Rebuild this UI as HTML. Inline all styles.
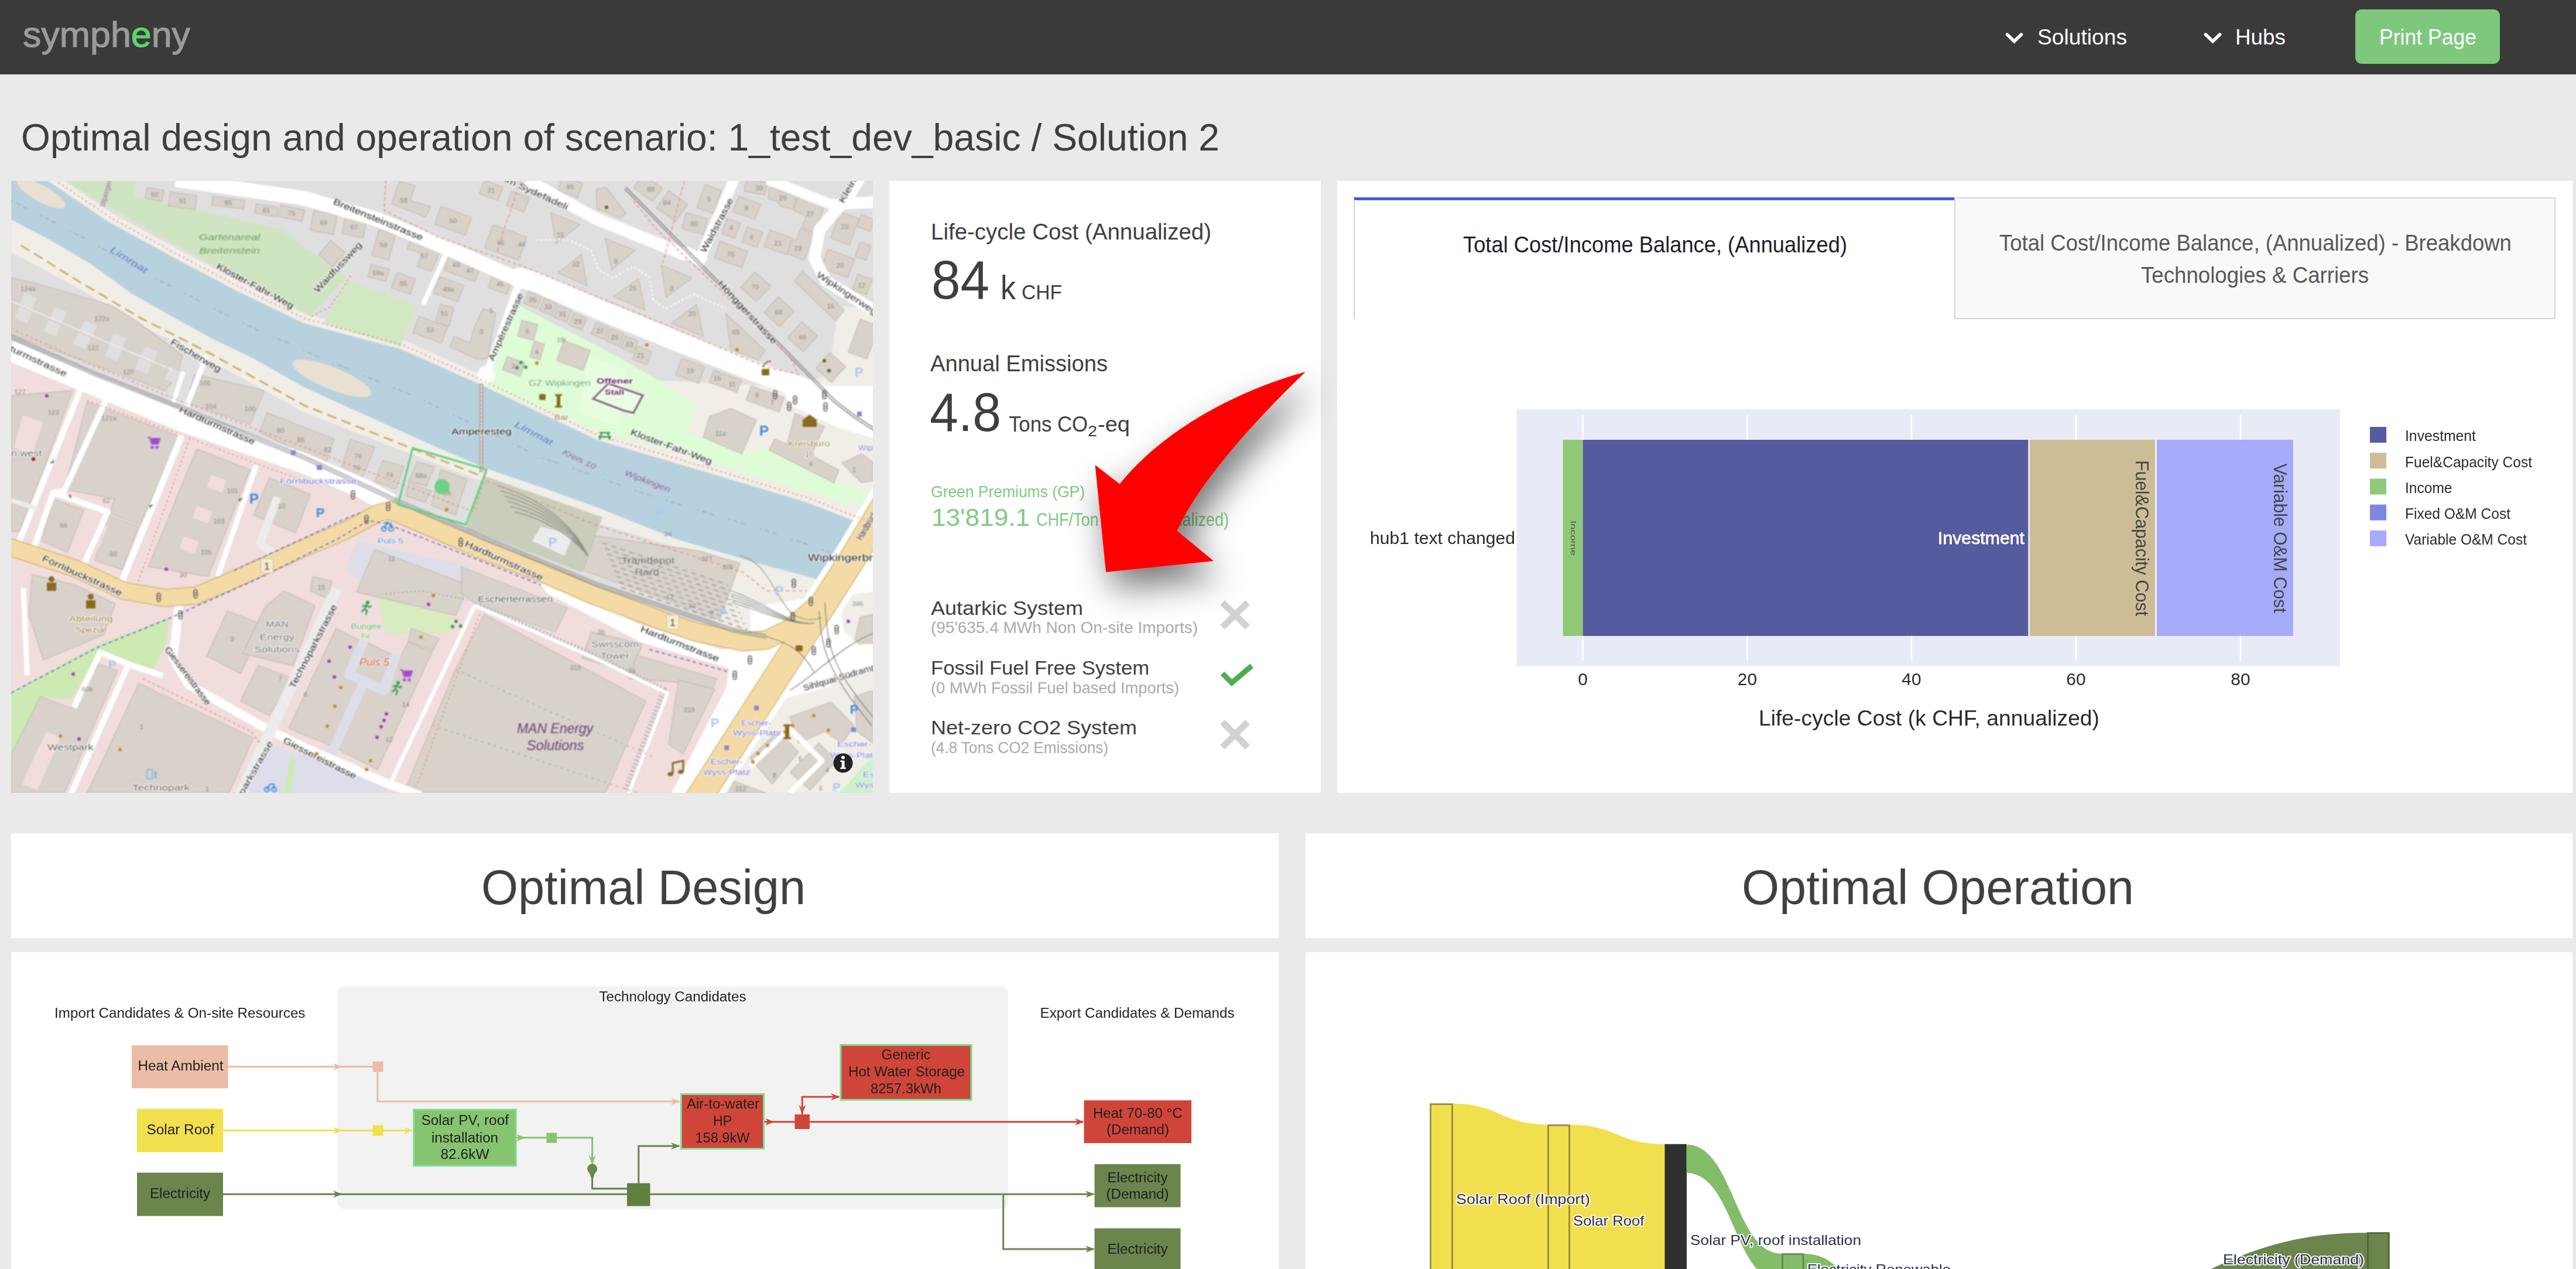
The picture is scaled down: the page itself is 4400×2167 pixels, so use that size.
<!DOCTYPE html>
<html><head><meta charset="utf-8"><title>Sympheny</title>
<style>
*{margin:0;padding:0;box-sizing:border-box}
html,body{width:4400px;height:2167px;overflow:hidden;background:#eaeaea;font-family:"Liberation Sans",sans-serif;color:#3c3c3c}
.abs{position:absolute}
.t{position:absolute;white-space:nowrap;line-height:1;transform-origin:0 0}
.card{position:absolute;background:#fff}
svg{position:absolute;left:0;top:0;overflow:visible}
svg text{font-family:"Liberation Sans",sans-serif}
</style></head><body>
<div class="abs" style="left:0;top:0;width:4400px;height:127px;background:#3a3a3a"></div>
<span class="t" style="left:39px;top:27.5px;font-size:62px;color:#9b9b9b;transform:scaleX(1.0121);-webkit-text-stroke:1.2px #9b9b9b">symph<span style="color:#5fd36c;-webkit-text-stroke:1.2px #5fd36c">e</span>ny</span>
<svg width="4400" height="130"><path d="M3428.5,59 L3440.5,70.5 L3452.5,59" fill="none" stroke="#fff" stroke-width="5.6" stroke-linecap="round" stroke-linejoin="miter"/></svg>
<span class="t" style="left:3480.0px;top:44.7px;font-size:37px;color:#fff;transform:scaleX(1.0052);">Solutions</span>
<svg width="4400" height="130"><path d="M3767.5,59 L3779.5,70.5 L3791.5,59" fill="none" stroke="#fff" stroke-width="5.6" stroke-linecap="round" stroke-linejoin="miter"/></svg>
<span class="t" style="left:3818.0px;top:44.7px;font-size:37px;color:#fff;transform:scaleX(0.9956);">Hubs</span>
<div class="abs" style="left:4023px;top:16px;width:247px;height:93px;background:#7dc87c;border-radius:11px"></div>
<span class="t" style="left:4064.0px;top:44.7px;font-size:37px;color:#fff;transform:scaleX(0.9608);">Print Page</span>
<span class="t" style="left:36.0px;top:202.8px;font-size:64px;color:#3e3e3e;transform:scaleX(1.0041);">Optimal design and operation of scenario: 1_test_dev_basic / Solution 2</span>
<div class="card" id="map" style="left:19px;top:309px;width:1472px;height:1045px;overflow:hidden;background:#ddd">
<svg width="1472" height="1045" viewBox="0 0 1472 1045" style="position:absolute;left:0;top:0;filter:blur(0.9px)"><rect width="1472" height="1045" fill="#e0dfdf"/><polygon points="0.0,300.0 142.0,352.0 276.0,406.0 500.0,482.0 654.0,566.0 800.0,628.0 997.0,708.0 1233.0,783.0 1300.0,790.0 1290.0,860.0 1160.0,1045.0 0.0,1045.0" fill="#f0dddc" /><polygon points="0.0,66.0 69.0,102.0 138.0,143.0 207.0,193.0 276.0,232.0 345.0,270.0 414.0,303.0 500.0,352.0 610.0,402.0 721.0,452.0 812.0,491.0 914.0,526.0 1000.0,557.0 1138.0,612.0 1276.0,653.0 1370.0,678.0 1480.0,708.0 1480.0,745.0 1370.0,715.0 1245.0,662.0 1173.0,636.0 1000.0,584.0 812.0,513.0 790.0,508.0 500.0,395.0 441.0,362.0 331.0,302.0 221.0,246.0 110.0,180.0 0.0,122.0" fill="#f1eee8" /><polygon points="1100.0,340.0 1345.0,352.0 1395.0,330.0 1414.0,215.0 1480.0,215.0 1480.0,600.0 1000.0,450.0 1000.0,400.0" fill="#f1eee8" /><polygon points="1290.0,800.0 1480.0,700.0 1480.0,1045.0 1180.0,1045.0" fill="#f1eee8" /><polyline points="63.0,0.0 165.0,69.0 276.0,130.0 386.0,188.0 500.0,243.0 665.0,287.0 798.0,346.0 1000.0,442.0 1193.0,499.0 1359.0,549.0 1436.0,579.0 1480.0,594.0" fill="none" stroke="#f1eee8" stroke-width="32" stroke-linejoin="round"/><polygon points="91.0,0.0 214.0,0.0 208.0,25.0 460.0,82.0 573.0,165.0 511.0,231.0 500.0,226.0 414.0,182.0 303.0,121.0 193.0,59.0" fill="#cfe5c1" /><polygon points="574.0,170.0 693.0,212.0 665.0,283.0 534.0,243.0" fill="#d1e8c3" /><polygon points="866.0,212.0 1049.0,307.0 1171.0,380.0 1154.0,430.0 1188.0,441.0 1248.0,463.0 1292.0,455.0 1414.0,513.0 1447.0,535.0 1430.0,552.0 1276.0,505.0 1138.0,463.0 1000.0,426.0 818.0,353.0 800.0,342.0 838.0,270.0" fill="#defcd6" /><polygon points="985.0,300.0 1049.0,320.0 1040.0,420.0 970.0,395.0" fill="#e6fde0" /><polygon points="0.0,874.0 149.0,791.0 270.0,746.0 266.0,786.0 243.0,834.0 152.0,801.0 102.0,885.0 50.0,880.0 0.0,979.0" fill="#cdeab2" /><polygon points="624.0,703.0 756.0,703.0 750.0,772.0 640.0,772.0" fill="#d8ecc0" /><polygon points="1414.0,1045.0 1472.0,982.0 1472.0,1045.0" fill="#c9f4cb" /><polygon points="1430.0,520.0 1472.0,535.0 1472.0,560.0 1440.0,552.0" fill="#defcd6" /><polygon points="63.0,0.0 165.0,69.0 276.0,130.0 386.0,188.0 500.0,243.0 665.0,287.0 798.0,346.0 1000.0,442.0 1193.0,499.0 1359.0,549.0 1436.0,579.0 1480.0,594.0 1480.0,708.0 1370.0,678.0 1276.0,653.0 1138.0,612.0 1000.0,557.0 914.0,526.0 812.0,491.0 721.0,452.0 610.0,402.0 500.0,352.0 414.0,303.0 345.0,270.0 276.0,232.0 207.0,193.0 138.0,143.0 69.0,102.0 0.0,66.0 0.0,0.0" fill="#b7d1de" /><polygon points="1447.0,690.0 1480.0,690.0 1480.0,712.0 1452.0,706.0" fill="#b7d1de" /><ellipse cx="52" cy="22" rx="46" ry="14" transform="rotate(28 52 22)" fill="#e9e0d2"/><ellipse cx="548" cy="337" rx="72" ry="19" transform="rotate(22 548 337)" fill="#e9e0d2"/><polyline points="0.0,33.0 120.0,95.0 250.0,168.0 400.0,245.0 520.0,298.0 700.0,372.0 900.0,470.0 1100.0,540.0 1300.0,600.0 1400.0,635.0" fill="none" stroke="#a596c4" stroke-width="1.7" stroke-dasharray="3 6 8 5 8 26" opacity="0.75"/><polygon points="809.0,504.0 1010.0,574.0 975.0,668.0 778.0,593.0" fill="#c9cdbb" /><polygon points="905.0,590.0 960.0,605.0 945.0,640.0 890.0,615.0" fill="#ececec" /><polygon points="1270.0,655.0 1372.0,682.0 1350.0,720.0 1262.0,690.0" fill="#ececec" /><polygon points="591.0,615.0 700.0,640.0 784.0,655.0 770.0,735.0 736.0,730.0 736.0,680.0 650.0,655.0 600.0,690.0 572.0,660.0" fill="#dedeea" /><polygon points="425.0,958.0 500.0,979.0 640.0,1030.0 640.0,1045.0 392.0,1045.0" fill="#dedeea" /><polygon points="466.0,1045.0 477.0,985.0 486.0,988.0 478.0,1045.0" fill="#cdeab2" /><polygon points="1245.0,653.0 1370.0,682.0 1410.0,690.0 1369.0,720.0 1275.0,735.0 1268.0,775.0 1222.0,768.0 1195.0,745.0" fill="#f1eee8" /><polygon points="1416.0,709.0 1480.0,693.0 1480.0,790.0 1448.0,792.0 1422.0,768.0" fill="#f1eee8" /><g fill="#d8d2cb" stroke="#c6bab0" stroke-width="1.3"><polygon points="232.4,11.1 260.9,16.2 257.6,34.9 229.1,29.8"/><polygon points="271.9,18.9 317.4,25.3 314.1,49.1 268.6,42.7"/><polygon points="344.8,25.7 399.3,33.4 397.2,48.3 342.7,40.6"/><polygon points="418.7,38.8 456.1,45.4 453.3,61.2 415.9,54.6"/><polygon points="460.5,40.9 501.6,49.6 497.5,69.1 456.4,60.4"/><polygon points="516.8,50.7 557.1,57.8 551.2,91.3 510.9,84.2"/><polygon points="571.0,60.5 607.2,68.2 601.0,97.5 564.8,89.8"/><polygon points="627.8,83.4 656.8,91.1 645.2,134.6 616.2,126.9"/><polygon points="614.9,142.2 645.8,150.5 640.1,171.8 609.2,163.5"/><polygon points="658.8,156.0 690.8,167.7 681.2,194.0 649.2,182.3"/><polygon points="546.0,101.5 570.5,122.0 550.0,146.5 525.5,126.0"/><polygon points="749.8,124.3 802.4,143.5 792.2,171.7 739.6,152.5"/><polygon points="732.0,163.4 773.3,178.4 763.0,206.6 721.7,191.6"/><polygon points="823.3,158.4 855.3,170.1 846.7,193.6 814.7,181.9"/><polygon points="733.1,210.4 756.3,216.7 748.1,247.6 724.9,241.3"/><polygon points="696.7,231.0 745.6,248.8 735.3,277.0 686.4,259.2"/><polygon points="734.2,43.4 786.8,62.5 775.8,92.6 723.2,73.5"/><polygon points="823.1,74.7 881.3,95.9 866.9,135.3 808.7,114.1"/><polygon points="808.1,-1.1 840.1,10.5 831.9,33.1 799.9,21.5"/><polygon points="854.9,17.3 885.0,28.3 876.1,52.7 846.0,41.7"/><polygon points="942.5,-8.4 976.4,3.9 967.5,28.4 933.6,16.1"/><polygon points="884.0,188.3 906.2,197.3 898.0,217.7 875.8,208.7"/><polygon points="910.0,200.3 932.2,209.3 924.0,229.7 901.8,220.7"/><polygon points="935.0,212.3 957.2,221.3 949.0,241.7 926.8,232.7"/><polygon points="961.0,225.3 983.2,234.3 975.0,254.7 952.8,245.7"/><polygon points="872.6,237.9 899.6,245.1 892.4,272.1 865.4,264.9"/><polygon points="893.4,273.7 910.8,278.4 903.6,305.5 886.2,300.8"/><polygon points="847.6,299.8 877.6,310.7 869.4,333.2 839.4,322.3"/><polygon points="944.2,272.9 989.3,289.3 977.0,323.1 931.9,306.7"/><polygon points="1079.2,-10.9 1112.0,12.0 1096.0,34.9 1063.2,12.0"/><polygon points="1122.9,16.8 1155.7,39.7 1135.1,69.2 1102.3,46.3"/><polygon points="1152.9,54.6 1189.6,64.4 1182.3,91.4 1145.6,81.6"/><polygon points="1185.5,6.1 1213.7,16.4 1199.3,55.9 1171.1,45.6"/><polygon points="1255.9,-4.0 1291.3,2.3 1287.5,24.0 1252.1,17.7"/><polygon points="1242.6,26.0 1280.2,39.7 1270.6,66.0 1233.0,52.3"/><polygon points="1223.2,63.7 1245.8,71.9 1236.2,98.3 1213.6,90.1"/><polygon points="1257.1,78.1 1283.4,87.6 1273.9,113.9 1247.6,104.4"/><polygon points="1211.2,102.9 1258.2,120.0 1248.0,148.1 1201.0,131.0"/><polygon points="1296.4,83.7 1335.9,98.1 1325.6,126.3 1286.1,111.9"/><polygon points="1416.2,52.6 1448.2,64.3 1431.8,109.4 1399.8,97.7"/><polygon points="1395.7,116.8 1440.8,133.2 1429.1,165.2 1384.0,148.8"/><polygon points="1446.4,159.0 1470.8,167.9 1461.2,194.2 1436.8,185.3"/><polygon points="1270.4,155.3 1297.1,179.4 1273.0,206.1 1246.3,182.0"/><polygon points="1310.4,198.0 1337.1,222.1 1313.0,248.8 1286.3,224.7"/><polygon points="1350.4,240.6 1377.1,264.7 1353.0,291.4 1326.3,267.3"/><polygon points="999.0,241.3 1021.2,250.3 1013.0,270.7 990.8,261.7"/><polygon points="1024.0,252.3 1046.2,261.3 1038.0,281.7 1015.8,272.7"/><polygon points="1049.0,264.3 1071.2,273.3 1063.0,293.7 1040.8,284.7"/><polygon points="1070.4,282.0 1094.5,291.7 1085.6,314.0 1061.5,304.3"/><polygon points="1145.4,302.7 1184.9,317.1 1174.6,345.3 1135.1,330.9"/><polygon points="1200.3,323.1 1247.3,340.2 1239.7,360.9 1192.7,343.8"/><polygon points="1398.7,293.2 1425.4,317.3 1401.3,344.0 1374.6,319.9"/><polygon points="1450.3,236.0 1482.2,247.6 1461.7,304.0 1429.8,292.4"/><polygon points="1264.3,349.5 1320.6,370.0 1311.7,394.5 1255.4,374.0"/><polygon points="1450.0,104.4 1468.8,111.2 1460.0,135.6 1441.2,128.8"/><polygon points="1452.5,57.6 1475.0,65.8 1467.5,86.4 1445.0,78.2"/><polygon points="682.0,102.0 732.0,121.0 718.0,154.0 693.0,146.0 701.0,124.0 676.5,116.0"/><polygon points="806.0,218.0 828.0,225.0 814.0,303.0 798.0,305.0 750.0,284.0 756.0,265.0 784.0,276.0 792.0,248.0"/><polygon points="663.0,1.0 690.0,8.0 682.0,33.0 716.5,44.0 708.0,62.0 650.0,39.0"/><polygon points="922.0,54.0 971.6,74.5 930.0,107.5"/><polygon points="974.0,125.5 984.0,179.0 934.0,157.0"/><polygon points="1000.0,14.0 1016.5,11.0 1050.0,55.0 1041.0,63.5 1000.0,47.0"/><polygon points="1294.5,11.0 1341.8,25.0 1335.5,48.8 1313.5,42.5 1310.0,36.0 1293.0,30.0"/><polygon points="1343.4,26.8 1389.0,42.5 1373.0,88.0 1351.0,80.0 1357.6,60.0 1337.0,50.4"/><polygon points="1348.0,82.0 1371.8,89.8 1354.4,135.5 1326.0,124.5 1332.4,102.4 1341.8,100.8"/><polygon points="1015.0,98.0 1066.0,118.6 1026.0,151.7"/><polygon points="1110.0,143.0 1163.0,165.5 1118.6,198.6"/><polygon points="1071.7,167.0 1082.8,220.7 1029.0,197.0"/><polygon points="1171.0,211.0 1182.0,266.0 1128.0,242.8"/><polygon points="1220.7,226.0 1288.0,289.7 1276.0,306.0 1229.0,287.0"/><polygon points="1351.7,154.5 1423.4,220.7 1408.0,238.6 1338.0,171.0"/><polygon points="1193.0,402.0 1229.0,388.6 1273.0,408.0 1248.0,466.0 1182.0,438.0"/><polygon points="1339.0,397.0 1389.0,419.0 1367.0,468.6 1414.0,493.5 1405.5,515.5 1295.0,460.0 1303.5,441.0 1325.5,449.0"/><polygon points="1419.0,482.0 1452.5,466.0 1472.0,480.0 1472.0,512.0 1452.0,515.0"/><polygon points="0.0,165.0 45.0,176.0 171.0,212.0 215.0,240.0 293.0,298.0 283.0,335.0 262.0,358.0 0.0,262.0"/><polygon points="313.0,330.0 433.0,358.0 408.0,416.0 300.0,378.0"/><polygon points="437.0,395.6 552.0,441.0 535.7,486.0 424.5,428.6"/><polygon points="580.0,441.0 621.0,455.0 596.5,515.5 563.0,493.0"/><polygon points="635.0,477.0 671.0,488.0 657.0,526.5 621.0,513.0"/><polygon points="693.0,479.6 723.0,488.0 709.6,521.0 679.0,512.7"/><polygon points="734.0,493.0 778.5,510.0 759.0,570.6 718.0,554.0"/><polygon points="679.0,515.5 718.0,529.0 707.0,548.6 673.7,537.5"/><polygon points="129.6,377.6 286.8,435.5 220.6,587.0 168.0,568.0 176.5,543.0 91.0,526.5"/><polygon points="317.0,457.6 408.0,493.0 336.5,675.0 234.4,659.0"/><polygon points="441.0,507.0 511.0,535.0 486.0,601.0 414.0,571.0"/><polygon points="72.0,543.0 124.0,562.0 96.0,634.0 52.0,615.0"/><polygon points="165.0,571.0 218.0,590.0 190.0,664.0 143.0,648.0"/><polygon points="0.0,367.0 105.0,358.0 60.0,480.0 14.0,598.0 0.0,598.0"/><polygon points="36.0,672.0 110.0,690.0 178.0,722.0 158.0,775.0 55.0,818.0 30.0,740.0"/><polygon points="218.0,858.0 414.0,951.0 372.0,1045.0 130.0,1045.0"/><polygon points="149.0,825.0 182.0,836.0 91.0,1045.0 0.0,1045.0 0.0,979.0 50.0,880.0 102.0,900.0"/><polygon points="369.5,734.0 430.0,758.0 392.0,841.0 334.0,811.0"/><polygon points="465.7,700.0 519.0,725.0 482.0,828.0 395.6,807.0 432.7,729.0"/><polygon points="422.0,827.0 480.0,849.0 441.0,913.0 392.0,888.0"/><polygon points="515.0,675.5 548.0,683.7 540.0,712.6 511.0,700.0"/><polygon points="621.0,629.0 780.0,690.0 760.0,742.0 590.0,702.0"/><polygon points="555.0,764.0 594.5,784.0 610.0,789.4 649.7,808.3 665.4,813.0 678.0,787.8 719.0,804.4 626.0,1005.0 560.5,972.0 535.7,960.0 474.0,935.0"/><polygon points="684.0,764.0 731.6,781.5 720.6,802.0 678.0,786.0"/><polygon points="808.0,740.0 905.0,792.0 1084.0,888.0 1015.0,1045.0 671.0,1045.0 757.0,838.0"/><polygon points="769.0,659.0 950.0,729.0 930.0,770.0 798.0,725.0 769.0,704.0"/><polygon points="991.0,770.0 1078.0,791.0 1060.0,840.0 975.0,815.0"/><polygon points="1069.0,810.0 1205.0,850.0 1196.0,872.0 1140.0,856.0 1055.0,850.0"/><polygon points="1140.0,852.0 1202.0,868.0 1148.0,978.0 1123.0,962.0"/><polygon points="997.0,606.0 1174.0,631.5 1245.0,653.0 1210.0,750.0 1103.0,710.0 977.0,665.0"/><polygon points="1330.0,915.0 1400.0,890.0 1440.0,930.0 1420.0,960.0 1390.0,940.0 1345.0,960.0"/><polygon points="1262.0,985.0 1310.0,940.0 1345.0,975.0 1300.0,1030.0"/><polygon points="1330.0,1010.0 1380.0,960.0 1410.0,990.0 1365.0,1040.0"/><polygon points="1440.0,880.0 1472.0,870.0 1472.0,960.0 1445.0,940.0"/><polygon points="1235.0,1025.0 1290.0,1045.0 1225.0,1045.0"/><polygon points="1450.0,745.0 1472.0,740.0 1472.0,800.0 1440.0,790.0"/></g><g fill="#e0dfdf"><polygon points="22.8,190.7 43.8,200.1 35.2,219.3 14.2,209.9"/><polygon points="14.8,214.7 35.8,224.1 27.2,243.3 6.2,233.9"/><polygon points="74.8,214.7 95.8,224.1 87.2,243.3 66.2,233.9"/><polygon points="63.8,236.7 84.8,246.1 76.2,265.3 55.2,255.9"/><polygon points="125.8,237.7 146.8,247.1 138.2,266.3 117.2,256.9"/><polygon points="114.8,258.7 135.8,268.1 127.2,287.3 106.2,277.9"/><polygon points="175.8,259.7 196.8,269.1 188.2,288.3 167.2,278.9"/><polygon points="168.8,279.7 189.8,289.1 181.2,308.3 160.2,298.9"/><polygon points="229.8,281.7 250.8,291.1 242.2,310.3 221.2,300.9"/><polygon points="219.8,301.7 240.8,311.1 232.2,330.3 211.2,320.9"/><polygon points="270.8,318.7 291.8,328.1 283.2,347.3 262.2,337.9"/></g><polyline points="0.0,205.5 276.0,322.7" fill="none" stroke="#f4f4f4" stroke-width="1.6" /><path d="M602.4,785.5 L577.2,842.2 L637,869.7 L657.6,808.3 M600.8,858.7 L559.9,950 L546,980" fill="none" stroke="#dedeea" stroke-width="16.5" stroke-linejoin="round"/><g fill="#f0dddc"><polygon points="341.6,501.9 367.9,511.5 360.4,532.1 334.1,522.5"/><polygon points="317.6,554.9 343.9,564.5 336.4,585.1 310.1,575.5"/><polygon points="294.6,606.9 320.9,616.5 313.4,637.1 287.1,627.5"/><polygon points="20.0,400.0 55.0,412.0 35.0,470.0 5.0,455.0"/><polygon points="128.0,575.0 165.0,590.0 140.0,650.0 100.0,636.0"/><polygon points="60.0,940.0 85.0,950.0 45.0,1040.0 18.0,1030.0"/></g><g stroke="#a9a39c" stroke-width="2" stroke-dasharray="9 7"><line x1="1010" y1="618.0" x2="1225" y2="690.0"/><line x1="1014" y1="627.5" x2="1229" y2="699.5"/><line x1="1018" y1="637.0" x2="1233" y2="709.0"/><line x1="1022" y1="646.5" x2="1237" y2="718.5"/><line x1="1026" y1="656.0" x2="1241" y2="728.0"/><line x1="1030" y1="665.5" x2="1245" y2="737.5"/><line x1="1034" y1="675.0" x2="1249" y2="747.0"/><line x1="1038" y1="684.5" x2="1253" y2="756.5"/><line x1="1042" y1="694.0" x2="1257" y2="766.0"/></g><polygon points="1314.0,350.0 1480.0,350.0 1480.0,441.0 1414.0,422.0 1331.0,383.0" fill="#ffffff" /><circle cx="811.6" cy="331" r="15" fill="#ffffff"/><polyline points="800.0,725.0 1000.0,812.0 1115.0,869.0 1050.0,1040.0" fill="none" stroke="#b9b9b9" stroke-width="9" stroke-dasharray="2.5 4" stroke-linejoin="round"/><polyline points="281.0,-2.0 500.0,29.5 624.0,65.0 748.0,116.0 870.0,170.0" fill="none" stroke="#ffffff" stroke-width="25" stroke-linejoin="round" stroke-linecap="butt"/><polyline points="868.0,165.0 897.0,173.0 1007.6,221.0 1118.0,266.0 1276.0,328.0 1345.0,350.0 1400.0,371.0" fill="none" stroke="#ffffff" stroke-width="34" stroke-linejoin="round" stroke-linecap="round"/><polyline points="880.0,-2.0 1000.0,65.0 1154.0,127.0" fill="none" stroke="#ffffff" stroke-width="21" stroke-linejoin="round" stroke-linecap="butt"/><polyline points="1235.0,-3.0 1177.0,132.0" fill="none" stroke="#ffffff" stroke-width="18" stroke-linejoin="round" stroke-linecap="butt"/><polyline points="1150.0,120.0 1185.0,140.0" fill="none" stroke="#ffffff" stroke-width="20" stroke-linejoin="round" stroke-linecap="butt"/><polyline points="1292.0,-3.0 1400.0,40.0 1419.0,39.0" fill="none" stroke="#ffffff" stroke-width="18" stroke-linejoin="round" stroke-linecap="butt"/><polyline points="1480.0,36.0 1419.0,39.0 1381.0,83.0 1372.0,132.0 1392.0,171.0 1480.0,225.0" fill="none" stroke="#ffffff" stroke-width="20" stroke-linejoin="round" stroke-linecap="butt"/><polyline points="1428.0,36.0 1452.0,-3.0" fill="none" stroke="#ffffff" stroke-width="14" stroke-linejoin="round" stroke-linecap="butt"/><polyline points="867.0,176.0 812.0,331.0" fill="none" stroke="#ffffff" stroke-width="12.5" stroke-linejoin="round" stroke-linecap="butt"/><polyline points="743.0,124.0 705.0,208.0" fill="none" stroke="#ffffff" stroke-width="8" stroke-linejoin="round" stroke-linecap="round"/><polyline points="-3.0,289.5 142.0,349.0 276.0,404.0 295.5,412.0 500.0,482.0 600.0,525.0 650.0,552.0" fill="none" stroke="#ffffff" stroke-width="35" stroke-linejoin="round" stroke-linecap="butt"/><polyline points="119.0,355.0 14.0,615.0" fill="none" stroke="#ffffff" stroke-width="10" stroke-linejoin="round" stroke-linecap="butt"/><polyline points="163.0,372.0 91.0,529.0 72.0,532.0 39.0,626.0" fill="none" stroke="#ffffff" stroke-width="10" stroke-linejoin="round" stroke-linecap="butt"/><polyline points="72.0,532.0 165.0,565.0 121.0,662.0" fill="none" stroke="#ffffff" stroke-width="10" stroke-linejoin="round" stroke-linecap="butt"/><polyline points="292.0,433.0 187.0,689.0" fill="none" stroke="#ffffff" stroke-width="11" stroke-linejoin="round" stroke-linecap="butt"/><polyline points="419.0,485.0 353.0,675.0" fill="none" stroke="#ffffff" stroke-width="9" stroke-linejoin="round" stroke-linecap="butt"/><polyline points="294.0,326.0 277.0,378.0" fill="none" stroke="#ffffff" stroke-width="8" stroke-linejoin="round" stroke-linecap="butt"/><polyline points="334.0,298.0 300.0,384.0" fill="none" stroke="#ffffff" stroke-width="9" stroke-linejoin="round" stroke-linecap="butt"/><polyline points="21.0,695.0 27.5,844.0" fill="none" stroke="#ffffff" stroke-width="9" stroke-linejoin="round" stroke-linecap="butt"/><polyline points="0.0,545.0 45.0,560.0" fill="none" stroke="#ececec" stroke-width="8" stroke-linejoin="round" stroke-linecap="butt"/><polyline points="287.0,715.0 281.0,780.0 276.0,814.0 303.0,860.0 430.0,932.0 500.0,967.0 638.0,1027.0 700.0,1050.0" fill="none" stroke="#ffffff" stroke-width="15" stroke-linejoin="round" stroke-linecap="butt"/><polyline points="259.0,845.0 204.0,827.0 152.0,805.0 107.5,899.0" fill="none" stroke="#ffffff" stroke-width="10" stroke-linejoin="round" stroke-linecap="butt"/><polyline points="198.5,830.0 150.0,940.0 102.0,1048.0" fill="none" stroke="#ffffff" stroke-width="10" stroke-linejoin="round" stroke-linecap="butt"/><polyline points="556.0,696.0 445.0,935.0 391.0,1048.0" fill="none" stroke="#ececec" stroke-width="19" stroke-linejoin="round" stroke-linecap="butt"/><polyline points="792.0,725.0 649.0,1026.0" fill="none" stroke="#ffffff" stroke-width="7" stroke-linejoin="round" stroke-linecap="butt"/><polyline points="792.0,725.0 1000.0,816.0 1121.0,875.0 1054.0,1048.0" fill="none" stroke="#ffffff" stroke-width="6" stroke-linejoin="round" stroke-linecap="butt"/><polyline points="455.0,540.0 425.0,620.0 455.0,640.0" fill="none" stroke="#ececec" stroke-width="14" stroke-linejoin="round" stroke-linecap="butt"/><polygon points="900.0,682.0 930.0,690.0 1076.0,758.0 1214.0,800.0 1303.0,786.0 1340.0,800.0 1276.0,860.0 1154.5,1045.0 1128.0,1045.0 1221.0,866.0 1226.0,832.0 1076.0,788.0 915.0,704.0" fill="#ffffff" /><polyline points="1520.0,508.0 1434.0,650.0 1402.0,700.0 1273.5,900.0 1180.5,1045.0 1160.0,1077.0" fill="none" stroke="#ffffff" stroke-width="66" /><polyline points="1300.0,880.0 1318.0,872.0 1388.0,838.0 1480.0,820.0" fill="none" stroke="#ffffff" stroke-width="24" /><polyline points="1262.0,1000.0 1330.0,935.0 1385.0,990.0 1330.0,1045.0" fill="none" stroke="#ffffff" stroke-width="9" stroke-linejoin="round"/><polyline points="1230.0,960.0 1320.0,880.0 1400.0,860.0" fill="none" stroke="#ffffff" stroke-width="7" /><polygon points="1262.0,727.0 1300.0,722.0 1362.0,712.0 1340.0,745.0 1305.0,765.0 1262.0,770.0" fill="#ffffff" /><polygon points="1400.0,700.0 1440.0,640.0 1480.0,610.0 1480.0,700.0 1416.0,709.0 1422.0,768.0 1448.0,792.0 1480.0,790.0 1480.0,835.0 1395.0,850.0 1300.0,880.0 1330.0,820.0" fill="#ffffff" /><polyline points="-3.0,625.0 110.0,662.0 193.0,700.0 262.0,712.0 317.0,708.0 375.0,683.0 500.0,627.0 569.0,598.0 625.0,568.0 645.0,562.0" fill="none" stroke="#c9a85e" stroke-width="30.5" stroke-linejoin="round"/><polyline points="640.0,561.0 660.0,567.0 776.0,617.0 800.0,628.0 914.0,672.0 997.0,708.0 1115.0,752.0 1172.0,771.0 1251.0,787.0 1290.0,784.0 1330.0,764.0 1362.0,736.0 1390.0,712.0" fill="none" stroke="#c9a85e" stroke-width="32.5" stroke-linejoin="round"/><polyline points="1520.0,508.0 1434.0,650.0 1402.0,700.0 1273.5,900.0 1180.5,1045.0 1160.0,1077.0" fill="none" stroke="#c9a85e" stroke-width="46.5" stroke-linejoin="round"/><polyline points="-3.0,625.0 110.0,662.0 193.0,700.0 262.0,712.0 317.0,708.0 375.0,683.0 500.0,627.0 569.0,598.0 625.0,568.0 645.0,562.0" fill="none" stroke="#f4dba6" stroke-width="28" stroke-linejoin="round"/><polyline points="640.0,561.0 660.0,567.0 776.0,617.0 800.0,628.0 914.0,672.0 997.0,708.0 1115.0,752.0 1172.0,771.0 1251.0,787.0 1290.0,784.0 1330.0,764.0 1362.0,736.0 1390.0,712.0" fill="none" stroke="#f4dba6" stroke-width="30" stroke-linejoin="round"/><polyline points="1520.0,508.0 1434.0,650.0 1402.0,700.0 1273.5,900.0 1180.5,1045.0 1160.0,1077.0" fill="none" stroke="#f4dba6" stroke-width="44" stroke-linejoin="round"/><polyline points="1050.4,10.7 1382.4,348.7 1406.3,373.6 1441.1,400.4 1481.0,426.4" fill="none" stroke="#707070" stroke-width="1.4" /><polyline points="1047.6,13.3 1379.6,351.3 1403.7,376.4 1438.9,403.6 1479.0,429.6" fill="none" stroke="#707070" stroke-width="1.4" /><polyline points="-4.4,268.1 140.7,332.1 294.2,392.7 498.7,475.1 663.6,552.1 798.7,609.1 998.8,692.2 1232.0,770.3 1289.4,781.3" fill="none" stroke="#808080" stroke-width="0.95" /><polyline points="-3.5,266.1 141.5,330.1 295.1,390.6 499.5,473.1 664.5,550.1 799.5,607.1 999.6,690.1 1232.6,768.1 1289.8,779.2" fill="none" stroke="#808080" stroke-width="0.95" /><polyline points="-2.5,263.9 142.5,327.9 295.9,388.4 500.5,470.9 665.5,547.9 800.5,604.9 1000.4,687.9 1233.4,765.9 1290.2,776.8" fill="none" stroke="#808080" stroke-width="0.95" /><polyline points="-1.6,261.9 143.3,325.9 296.8,386.3 501.3,468.9 666.4,545.9 801.3,602.9 1001.2,685.8 1234.0,763.7 1290.6,774.7" fill="none" stroke="#808080" stroke-width="0.95" /><path d="M830,520 C900,540 960,585 985,640" fill="none" stroke="#8f9088" stroke-width="1.3"/><path d="M836,529 C904,548 960,590 985,640" fill="none" stroke="#8f9088" stroke-width="1.3"/><path d="M842,538 C908,556 960,595 985,640" fill="none" stroke="#8f9088" stroke-width="1.3"/><path d="M848,547 C912,564 960,600 985,640" fill="none" stroke="#8f9088" stroke-width="1.3"/><path d="M854,556 C916,572 960,605 985,640" fill="none" stroke="#8f9088" stroke-width="1.3"/><path d="M860,565 C920,580 960,610 985,640" fill="none" stroke="#8f9088" stroke-width="1.3"/><path d="M1230,700 C1290,720 1330,760 1372,755" fill="none" stroke="#8f9088" stroke-width="1.2"/><path d="M1230,705 C1290,724 1330,760 1372,755" fill="none" stroke="#8f9088" stroke-width="1.2"/><path d="M1230,710 C1290,728 1330,760 1372,755" fill="none" stroke="#8f9088" stroke-width="1.2"/><path d="M1230,715 C1290,732 1330,760 1372,755" fill="none" stroke="#8f9088" stroke-width="1.2"/><path d="M1230,720 C1290,736 1330,760 1372,755" fill="none" stroke="#8f9088" stroke-width="1.2"/><path d="M1245,640 C1290,650 1300,700 1330,735 C1345,750 1370,752 1385,745" fill="none" stroke="#8f9088" stroke-width="1.2"/><path d="M1290,778 C1330,790 1350,800 1372,840 M1390,720 C1395,800 1400,830 1480,925 M1380,735 C1385,800 1392,835 1470,930 M1330,870 C1380,840 1420,790 1480,770" fill="none" stroke="#7b7b7b" stroke-width="1.3"/><polyline points="17.0,110.0 110.0,168.0 221.0,234.0 331.0,290.0 441.0,350.0 500.0,383.0 798.0,502.0" fill="none" stroke="#c4a64a" stroke-width="2.6" stroke-dasharray="17 9"/><polyline points="67.5,-6.6 169.2,62.2 279.8,123.0 389.6,180.9 502.7,235.5 667.6,279.4 801.4,338.7 1002.9,434.5 1195.3,491.3 1361.5,541.4 1438.8,571.5 1482.6,586.4" fill="none" stroke="#f08a80" stroke-width="1.8" stroke-dasharray="3 5"/><polyline points="580.0,162.0 545.0,215.0 512.0,232.0" fill="none" stroke="#f08a80" stroke-width="1.8" stroke-dasharray="3 5"/><polyline points="640.0,-2.0 637.0,50.0 730.0,96.0 880.0,148.0 1100.0,238.0 1290.0,318.0 1345.0,330.0 1330.0,300.0 1100.0,80.0 1060.0,30.0" fill="none" stroke="#f08a80" stroke-width="1.6" stroke-dasharray="6 4"/><polyline points="870.0,0.0 830.0,120.0" fill="none" stroke="#f08a80" stroke-width="1.6" stroke-dasharray="6 4"/><polyline points="1150.0,0.0 1113.0,140.0" fill="none" stroke="#f08a80" stroke-width="1.6" stroke-dasharray="6 4"/><polyline points="0.0,252.0 142.0,316.0 295.0,378.0 520.0,462.0 790.0,565.0 812.0,498.0" fill="none" stroke="#f08a80" stroke-width="1.6" stroke-dasharray="4 5"/><polyline points="812.0,512.0 1000.0,588.0 1250.0,668.0 1290.0,700.0 1360.0,700.0" fill="none" stroke="#f08a80" stroke-width="1.6" stroke-dasharray="6 5"/><polyline points="305.0,440.0 215.0,690.0" fill="none" stroke="#f08a80" stroke-width="1.6" stroke-dasharray="3 5"/><polyline points="130.0,375.0 290.0,433.0 420.0,483.0 520.0,520.0" fill="none" stroke="#f08a80" stroke-width="1.6" stroke-dasharray="3 5"/><polyline points="800.0,740.0 690.0,1040.0" fill="none" stroke="#f08a80" stroke-width="1.6" stroke-dasharray="3 5"/><polyline points="225.0,850.0 410.0,940.0 425.0,960.0" fill="none" stroke="#f08a80" stroke-width="1.6" stroke-dasharray="5 4"/><polyline points="897.0,101.0 950.0,100.0 991.0,119.0 1004.0,152.0 1028.0,165.0 1063.0,146.0 1091.0,165.0 1097.0,204.0 1119.0,218.0 1165.0,193.0 1221.0,218.0" fill="none" stroke="#f6f6f6" stroke-width="3.2" stroke-dasharray="3.5 4" stroke-linejoin="round"/><polyline points="803.0,346.0 803.0,498.0" fill="none" stroke="#d9d5cf" stroke-width="6" /><polyline points="800.5,346.0 800.5,498.0" fill="none" stroke="#8a8a8a" stroke-width="1" /><polyline points="805.5,346.0 805.5,498.0" fill="none" stroke="#8a8a8a" stroke-width="1" /><polyline points="803.0,346.0 803.0,498.0" fill="none" stroke="#f08a80" stroke-width="1.6" stroke-dasharray="3 4"/><polyline points="0.0,874.0 149.0,796.0 270.0,747.0 330.0,720.0 420.0,680.0 560.0,610.0 610.0,580.0 640.0,585.0 780.0,640.0 905.0,690.0" fill="none" stroke="#5a5ae0" stroke-width="1.6" stroke-dasharray="6 5"/><polyline points="381.0,665.0 500.0,610.0 575.0,575.0 600.0,565.0" fill="none" stroke="#5a5ae0" stroke-width="1.6" stroke-dasharray="6 5"/><polyline points="1090.0,800.0 1225.0,838.0" fill="none" stroke="#5a5ae0" stroke-width="1.6" stroke-dasharray="6 5"/><polyline points="640.0,705.0 700.0,700.0 780.0,715.0" fill="none" stroke="#9a9a9a" stroke-width="2" stroke-dasharray="2 5"/><polyline points="760.0,835.0 1100.0,985.0" fill="none" stroke="#aaa" stroke-width="2" stroke-dasharray="3 8"/><polyline points="720.0,930.0 1070.0,1045.0" fill="none" stroke="#aaa" stroke-width="2" stroke-dasharray="3 8"/><text transform="translate(548.9,39.0) rotate(22.5)" font-size="15" fill="#2e2e2e" textLength="164.5" lengthAdjust="spacingAndGlyphs" stroke="#fff" stroke-opacity="0.75" stroke-width="2.4" paint-order="stroke" stroke-linejoin="round">Breitensteinstrasse</text><text transform="translate(349.4,148.8) rotate(28.3)" font-size="15" fill="#2e2e2e" textLength="147.6" lengthAdjust="spacingAndGlyphs" stroke="#fff" stroke-opacity="0.75" stroke-width="2.4" paint-order="stroke" stroke-linejoin="round">Kloster-Fahr-Weg</text><text transform="translate(524.0,191.7) rotate(-47.2)" font-size="15" fill="#2e2e2e" textLength="111.8" lengthAdjust="spacingAndGlyphs" stroke="#fff" stroke-opacity="0.75" stroke-width="2.4" paint-order="stroke" stroke-linejoin="round">Waidfussweg</text><text transform="translate(271.3,277.7) rotate(30.3)" font-size="15" fill="#2e2e2e" textLength="97.2" lengthAdjust="spacingAndGlyphs" stroke="#fff" stroke-opacity="0.75" stroke-width="2.4" paint-order="stroke" stroke-linejoin="round">Fischerweg</text><text transform="translate(285.8,393.9) rotate(24.0)" font-size="15" fill="#2e2e2e" textLength="140.1" lengthAdjust="spacingAndGlyphs" stroke="#fff" stroke-opacity="0.75" stroke-width="2.4" paint-order="stroke" stroke-linejoin="round">Hardturmstrasse</text><text transform="translate(-3.3,289.9) rotate(25.1)" font-size="15" fill="#2e2e2e" textLength="106.0" lengthAdjust="spacingAndGlyphs" stroke="#fff" stroke-opacity="0.75" stroke-width="2.4" paint-order="stroke" stroke-linejoin="round">turmstrasse</text><text transform="translate(51.8,647.9) rotate(24.3)" font-size="15" fill="#2e2e2e" textLength="148.1" lengthAdjust="spacingAndGlyphs" stroke="#fff" stroke-opacity="0.75" stroke-width="2.4" paint-order="stroke" stroke-linejoin="round">Förrlibuckstrasse</text><text transform="translate(823.9,308.2) rotate(-65.9)" font-size="15" fill="#2e2e2e" textLength="124.9" lengthAdjust="spacingAndGlyphs" stroke="#fff" stroke-opacity="0.75" stroke-width="2.4" paint-order="stroke" stroke-linejoin="round">Ampèrestrasse</text><text transform="translate(1206.0,175.7) rotate(47.3)" font-size="15" fill="#2e2e2e" textLength="141.5" lengthAdjust="spacingAndGlyphs" stroke="#fff" stroke-opacity="0.75" stroke-width="2.4" paint-order="stroke" stroke-linejoin="round">Hönggerstrasse</text><text transform="translate(1185.8,123.5) rotate(-62.2)" font-size="15" fill="#2e2e2e" textLength="102.9" lengthAdjust="spacingAndGlyphs" stroke="#fff" stroke-opacity="0.75" stroke-width="2.4" paint-order="stroke" stroke-linejoin="round">Waidstrasse</text><text transform="translate(1375.0,162.5) rotate(33.8)" font-size="15" fill="#2e2e2e" textLength="120.4" lengthAdjust="spacingAndGlyphs" stroke="#fff" stroke-opacity="0.75" stroke-width="2.4" paint-order="stroke" stroke-linejoin="round">Wipkingerweg</text><text transform="translate(833.7,-3.1) rotate(24.7)" font-size="15" fill="#2e2e2e" textLength="126.6" lengthAdjust="spacingAndGlyphs" stroke="#fff" stroke-opacity="0.75" stroke-width="2.4" paint-order="stroke" stroke-linejoin="round">Am Sydefädeli</text><text transform="translate(1421.7,38.7) rotate(-60.1)" font-size="15" fill="#2e2e2e" textLength="46.1" lengthAdjust="spacingAndGlyphs" stroke="#fff" stroke-opacity="0.75" stroke-width="2.4" paint-order="stroke" stroke-linejoin="round">Klein</text><text transform="translate(773.8,622.9) rotate(24.4)" font-size="15" fill="#2e2e2e" textLength="145.0" lengthAdjust="spacingAndGlyphs" stroke="#fff" stroke-opacity="0.75" stroke-width="2.4" paint-order="stroke" stroke-linejoin="round">Hardturmstrasse</text><text transform="translate(1074.0,769.0) rotate(21.4)" font-size="15" fill="#2e2e2e" textLength="142.8" lengthAdjust="spacingAndGlyphs" stroke="#fff" stroke-opacity="0.75" stroke-width="2.4" paint-order="stroke" stroke-linejoin="round">Hardturmstrasse</text><text transform="translate(1057.1,433.1) rotate(20.3)" font-size="15" fill="#2e2e2e" textLength="147.1" lengthAdjust="spacingAndGlyphs" stroke="#fff" stroke-opacity="0.75" stroke-width="2.4" paint-order="stroke" stroke-linejoin="round">Kloster-Fahr-Weg</text><text transform="translate(483.8,867.5) rotate(-62.6)" font-size="15" fill="#2e2e2e" textLength="158.8" lengthAdjust="spacingAndGlyphs" stroke="#fff" stroke-opacity="0.75" stroke-width="2.4" paint-order="stroke" stroke-linejoin="round">Technoparkstrasse</text><text transform="translate(261.7,800.2) rotate(53.1)" font-size="15" fill="#2e2e2e" textLength="120.0" lengthAdjust="spacingAndGlyphs" stroke="#fff" stroke-opacity="0.75" stroke-width="2.4" paint-order="stroke" stroke-linejoin="round">Giessereistrasse</text><text transform="translate(463.5,958.8) rotate(27.1)" font-size="15" fill="#2e2e2e" textLength="138.2" lengthAdjust="spacingAndGlyphs" stroke="#fff" stroke-opacity="0.75" stroke-width="2.4" paint-order="stroke" stroke-linejoin="round">Giessereistrasse</text><text transform="translate(364.7,1105.7) rotate(-60.4)" font-size="15" fill="#2e2e2e" textLength="167.9" lengthAdjust="spacingAndGlyphs" stroke="#fff" stroke-opacity="0.75" stroke-width="2.4" paint-order="stroke" stroke-linejoin="round">Technoparkstrasse</text><text transform="translate(1354.6,871.2) rotate(-16.7)" font-size="15" fill="#2e2e2e" textLength="138.9" lengthAdjust="spacingAndGlyphs" stroke="#fff" stroke-opacity="0.75" stroke-width="2.4" paint-order="stroke" stroke-linejoin="round">Sihlquai-Südrampe</text><text transform="translate(1453.0,614.9) rotate(-60.0)" font-size="16" fill="#2e2e2e" textLength="60.0" lengthAdjust="spacingAndGlyphs" stroke="#fff" stroke-opacity="0.75" stroke-width="2.4" paint-order="stroke" stroke-linejoin="round">Hardbrücke</text><text transform="translate(168.0,120.0) rotate(31.9)" font-size="15" fill="#6d82c8" textLength="71.9" lengthAdjust="spacingAndGlyphs" font-style="italic">Limmat</text><text transform="translate(859.0,419.0) rotate(27.6)" font-size="15" fill="#6d82c8" textLength="71.1" lengthAdjust="spacingAndGlyphs" font-style="italic">Limmat</text><text transform="translate(941.0,466.0) rotate(26.1)" font-size="13" fill="#9a6aa0" textLength="61.3" lengthAdjust="spacingAndGlyphs" font-style="italic">Kreis 10</text><text transform="translate(1047.0,502.0) rotate(21.3)" font-size="14" fill="#9a6aa0" textLength="82.6" lengthAdjust="spacingAndGlyphs" font-style="italic">Wipkingen</text><text transform="translate(160.0,45.0) rotate(-75.1)" font-size="13" fill="#9a6aa0" textLength="46.6" lengthAdjust="spacingAndGlyphs" font-style="italic">Wipkingen</text><text transform="translate(321.0,100.5) rotate(0.0)" font-size="15" fill="#78a069" textLength="104.0" lengthAdjust="spacingAndGlyphs" font-style="italic">Gartenareal</text><text transform="translate(321.0,124.0) rotate(0.0)" font-size="15" fill="#78a069" textLength="104.0" lengthAdjust="spacingAndGlyphs" font-style="italic">Breitenstein</text><text transform="translate(752.0,433.0) rotate(0.0)" font-size="15.5" fill="#222" textLength="103.0" lengthAdjust="spacingAndGlyphs" stroke="#fff" stroke-opacity="0.75" stroke-width="2.4" paint-order="stroke" stroke-linejoin="round">Amperesteg</text><text transform="translate(1361.0,649.0) rotate(0.0)" font-size="16.5" fill="#222" textLength="155.0" lengthAdjust="spacingAndGlyphs" stroke="#fff" stroke-opacity="0.75" stroke-width="2.4" paint-order="stroke" stroke-linejoin="round">Wipkingerbrücke</text><text transform="translate(884.0,349.5) rotate(0.0)" font-size="14" fill="#62b566" textLength="106.0" lengthAdjust="spacingAndGlyphs" stroke="#fff" stroke-opacity="0.75" stroke-width="2.4" paint-order="stroke" stroke-linejoin="round">GZ Wipkingen</text><text transform="translate(1000.0,346.0) rotate(0.0)" font-size="13.5" fill="#73266a" textLength="62.0" lengthAdjust="spacingAndGlyphs" font-weight="bold" stroke="#fff" stroke-opacity="0.75" stroke-width="2.4" paint-order="stroke" stroke-linejoin="round">Offener</text><text transform="translate(1014.0,364.5) rotate(0.0)" font-size="13.5" fill="#73266a" textLength="33.0" lengthAdjust="spacingAndGlyphs" font-weight="bold" stroke="#fff" stroke-opacity="0.75" stroke-width="2.4" paint-order="stroke" stroke-linejoin="round">Stall</text><text transform="translate(928.0,408.0) rotate(0.0)" font-size="12.5" fill="#a58444" textLength="24.0" lengthAdjust="spacingAndGlyphs" stroke="#fff" stroke-opacity="0.75" stroke-width="2.4" paint-order="stroke" stroke-linejoin="round">Bar</text><text transform="translate(459.0,517.0) rotate(0.0)" font-size="13" fill="#7c7cd8" textLength="131.0" lengthAdjust="spacingAndGlyphs" stroke="#fff" stroke-opacity="0.75" stroke-width="2.4" paint-order="stroke" stroke-linejoin="round">Förrlibuckstrasse</text><text transform="translate(625.5,619.0) rotate(0.0)" font-size="13" fill="#4a90e0" textLength="44.5" lengthAdjust="spacingAndGlyphs" stroke="#fff" stroke-opacity="0.75" stroke-width="2.4" paint-order="stroke" stroke-linejoin="round">Puls 5</text><text transform="translate(1042.0,652.8) rotate(0.0)" font-size="15" fill="#777" textLength="91.0" lengthAdjust="spacingAndGlyphs">Tramdepot</text><text transform="translate(1065.0,673.0) rotate(0.0)" font-size="15" fill="#777" textLength="42.0" lengthAdjust="spacingAndGlyphs">Hard</text><text transform="translate(797.0,719.0) rotate(0.0)" font-size="14.5" fill="#666" textLength="128.0" lengthAdjust="spacingAndGlyphs" stroke="#fff" stroke-opacity="0.75" stroke-width="2.4" paint-order="stroke" stroke-linejoin="round">Escherterrassen</text><text transform="translate(991.0,796.0) rotate(0.0)" font-size="14" fill="#777" textLength="81.0" lengthAdjust="spacingAndGlyphs" stroke="#fff" stroke-opacity="0.75" stroke-width="2.4" paint-order="stroke" stroke-linejoin="round">Swisscom</text><text transform="translate(1007.0,815.7) rotate(0.0)" font-size="14" fill="#777" textLength="49.0" lengthAdjust="spacingAndGlyphs" stroke="#fff" stroke-opacity="0.75" stroke-width="2.4" paint-order="stroke" stroke-linejoin="round">Tower</text><text transform="translate(435.0,762.0) rotate(0.0)" font-size="14" fill="#777" textLength="39.0" lengthAdjust="spacingAndGlyphs" stroke="#fff" stroke-opacity="0.75" stroke-width="2.4" paint-order="stroke" stroke-linejoin="round">MAN</text><text transform="translate(424.5,784.0) rotate(0.0)" font-size="14" fill="#777" textLength="59.5" lengthAdjust="spacingAndGlyphs" stroke="#fff" stroke-opacity="0.75" stroke-width="2.4" paint-order="stroke" stroke-linejoin="round">Energy</text><text transform="translate(415.5,805.0) rotate(0.0)" font-size="14" fill="#777" textLength="77.0" lengthAdjust="spacingAndGlyphs" stroke="#fff" stroke-opacity="0.75" stroke-width="2.4" paint-order="stroke" stroke-linejoin="round">Solutions</text><text transform="translate(864.0,943.0) rotate(0.0)" font-size="23" fill="#684878" textLength="130.0" lengthAdjust="spacingAndGlyphs" font-style="italic">MAN Energy</text><text transform="translate(880.5,972.0) rotate(0.0)" font-size="23" fill="#684878" textLength="98.0" lengthAdjust="spacingAndGlyphs" font-style="italic">Solutions</text><text transform="translate(595.0,828.0) rotate(0.0)" font-size="18" fill="#d4604c" textLength="51.0" lengthAdjust="spacingAndGlyphs" font-style="italic" stroke="#fff" stroke-opacity="0.75" stroke-width="2.4" paint-order="stroke" stroke-linejoin="round">Puls 5</text><text transform="translate(580.0,764.5) rotate(0.0)" font-size="12.5" fill="#5fb562" textLength="52.5" lengthAdjust="spacingAndGlyphs" stroke="#fff" stroke-opacity="0.75" stroke-width="2.4" paint-order="stroke" stroke-linejoin="round">Bungee</text><text transform="translate(598.0,782.0) rotate(0.0)" font-size="12.5" fill="#5fb562" textLength="15.0" lengthAdjust="spacingAndGlyphs" stroke="#fff" stroke-opacity="0.75" stroke-width="2.4" paint-order="stroke" stroke-linejoin="round">Fit</text><text transform="translate(62.0,971.6) rotate(0.0)" font-size="14.5" fill="#666" textLength="78.5" lengthAdjust="spacingAndGlyphs" stroke="#fff" stroke-opacity="0.75" stroke-width="2.4" paint-order="stroke" stroke-linejoin="round">Westpark</text><text transform="translate(207.0,1041.0) rotate(0.0)" font-size="14.5" fill="#666" textLength="98.0" lengthAdjust="spacingAndGlyphs" stroke="#fff" stroke-opacity="0.75" stroke-width="2.4" paint-order="stroke" stroke-linejoin="round">Technopark</text><text transform="translate(99.0,751.5) rotate(0.0)" font-size="13" fill="#a58444" textLength="74.5" lengthAdjust="spacingAndGlyphs" stroke="#fff" stroke-opacity="0.75" stroke-width="2.4" paint-order="stroke" stroke-linejoin="round">Abteilung</text><text transform="translate(110.0,770.8) rotate(0.0)" font-size="13" fill="#a58444" textLength="52.5" lengthAdjust="spacingAndGlyphs" stroke="#fff" stroke-opacity="0.75" stroke-width="2.4" paint-order="stroke" stroke-linejoin="round">Spezial</text><text transform="translate(1247.0,929.5) rotate(0.0)" font-size="13" fill="#7c7cd8" textLength="51.0" lengthAdjust="spacingAndGlyphs" stroke="#fff" stroke-opacity="0.75" stroke-width="2.4" paint-order="stroke" stroke-linejoin="round">Escher-</text><text transform="translate(1233.0,947.4) rotate(0.0)" font-size="13" fill="#7c7cd8" textLength="81.5" lengthAdjust="spacingAndGlyphs" stroke="#fff" stroke-opacity="0.75" stroke-width="2.4" paint-order="stroke" stroke-linejoin="round">Wyss-Platz</text><text transform="translate(1194.5,995.7) rotate(0.0)" font-size="13" fill="#7c7cd8" textLength="55.0" lengthAdjust="spacingAndGlyphs" stroke="#fff" stroke-opacity="0.75" stroke-width="2.4" paint-order="stroke" stroke-linejoin="round">Escher-</text><text transform="translate(1182.0,1014.4) rotate(0.0)" font-size="13" fill="#7c7cd8" textLength="80.0" lengthAdjust="spacingAndGlyphs" stroke="#fff" stroke-opacity="0.75" stroke-width="2.4" paint-order="stroke" stroke-linejoin="round">Wyss-Platz</text><text transform="translate(1411.0,966.0) rotate(0.0)" font-size="13" fill="#7c7cd8" textLength="58.0" lengthAdjust="spacingAndGlyphs" stroke="#fff" stroke-opacity="0.75" stroke-width="2.4" paint-order="stroke" stroke-linejoin="round">Escher-</text><text transform="translate(1398.6,984.5) rotate(0.0)" font-size="13" fill="#7c7cd8" textLength="81.4" lengthAdjust="spacingAndGlyphs" stroke="#fff" stroke-opacity="0.75" stroke-width="2.4" paint-order="stroke" stroke-linejoin="round">Wyss-Platz</text><text transform="translate(1455.0,1018.0) rotate(0.0)" font-size="13" fill="#7c7cd8" textLength="55.0" lengthAdjust="spacingAndGlyphs" stroke="#fff" stroke-opacity="0.75" stroke-width="2.4" paint-order="stroke" stroke-linejoin="round">Escher-</text><text transform="translate(1442.0,1036.0) rotate(0.0)" font-size="13" fill="#7c7cd8" textLength="81.0" lengthAdjust="spacingAndGlyphs" stroke="#fff" stroke-opacity="0.75" stroke-width="2.4" paint-order="stroke" stroke-linejoin="round">Wyss-Platz</text><text transform="translate(1447.0,460.0) rotate(0.0)" font-size="13" fill="#7c7cd8" textLength="93.0" lengthAdjust="spacingAndGlyphs" stroke="#fff" stroke-opacity="0.75" stroke-width="2.4" paint-order="stroke" stroke-linejoin="round">Wipkingerplatz</text><text transform="translate(1327.0,452.6) rotate(0.0)" font-size="13" fill="#a58444" textLength="71.5" lengthAdjust="spacingAndGlyphs" stroke="#fff" stroke-opacity="0.75" stroke-width="2.4" paint-order="stroke" stroke-linejoin="round">Kreisbüro</text><text transform="translate(1356.0,471.0) rotate(0.0)" font-size="13" fill="#a58444" textLength="15.0" lengthAdjust="spacingAndGlyphs" stroke="#fff" stroke-opacity="0.75" stroke-width="2.4" paint-order="stroke" stroke-linejoin="round">10</text><text transform="translate(0.0,470.0) rotate(0.0)" font-size="14" fill="#666" textLength="52.5" lengthAdjust="spacingAndGlyphs" stroke="#fff" stroke-opacity="0.75" stroke-width="2.4" paint-order="stroke" stroke-linejoin="round">n west</text><g font-size="11.5" fill="#8c8680" text-anchor="middle"><text x="245" y="27">93</text><text x="293" y="38">91</text><text x="371" y="41">85</text><text x="436" y="54">81</text><text x="479" y="59">75</text><text x="534" y="75">69</text><text x="586" y="83">67</text><text x="636" y="113">59</text><text x="706" y="132">57</text><text x="627" y="161">59a</text><text x="670" y="179">55</text><text x="760" y="147">49</text><text x="784" y="157">47</text><text x="747" y="189">49a</text><text x="835" y="180">45</text><text x="740" y="230">51</text><text x="716" y="258">53</text><text x="820" y="225">5</text><text x="803" y="261">3</text><text x="671" y="37">58</text><text x="755" y="72">50</text><text x="836" y="109">46</text><text x="872" y="112">44</text><text x="820" y="20">21</text><text x="938" y="96">15</text><text x="965" y="146">32</text><text x="955" y="14">95</text><text x="891" y="207">35</text><text x="917" y="219">33</text><text x="942" y="231">31</text><text x="968" y="244">29</text><text x="882" y="261">6</text><text x="898" y="296">4</text><text x="858" y="320">2</text><text x="940" y="275">19r</text><text x="1093" y="18">88</text><text x="1120" y="41">84</text><text x="1167" y="77">80</text><text x="1192" y="35">5</text><text x="1278" y="16">39</text><text x="1318" y="33">29</text><text x="1365" y="60">27</text><text x="1256" y="50">8</text><text x="1230" y="84">4</text><text x="1265" y="100">6</text><text x="1229" y="129">76</text><text x="1310" y="110">21</text><text x="1344" y="119">23</text><text x="1424" y="82">23</text><text x="1416" y="148">20</text><text x="1453" y="182">12</text><text x="1033" y="141">9</text><text x="1128" y="187">3</text><text x="1062" y="187">26</text><text x="1163" y="231">20</text><text x="1238" y="262">69</text><text x="1271" y="185">70</text><text x="1311" y="228">68</text><text x="1352" y="271">66</text><text x="1400" y="218">15</text><text x="1006" y="260">27</text><text x="1031" y="271">25</text><text x="1056" y="283">23</text><text x="1075" y="302">21</text><text x="1160" y="328">19</text><text x="1206" y="341">15</text><text x="1232" y="351">11</text><text x="1274" y="370">9</text><text x="1300" y="382">7</text><text x="1212" y="435">11a</text><text x="1440" y="497">1</text><text x="1366" y="487">4</text><text x="29" y="188">124a</text><text x="155" y="239">122a</text><text x="140" y="289">122</text><text x="200" y="330">120</text><text x="331" y="349">106</text><text x="341" y="389">104</text><text x="408" y="393">100</text><text x="460" y="430">90</text><text x="495" y="446">86</text><text x="541" y="463">82</text><text x="593" y="474">76</text><text x="590" y="494">76</text><text x="646" y="506">74</text><text x="700" y="507">68a</text><text x="745" y="537">66</text><text x="15" y="364">127</text><text x="72" y="399">123</text><text x="167" y="409">121a</text><text x="163" y="550">62</text><text x="90" y="592">66</text><text x="175" y="641">60</text><text x="378" y="533">101</text><text x="355" y="585">103</text><text x="333" y="638">105</text><text x="294" y="677">30</text><text x="462" y="559">10</text><text x="650" y="649">11</text><text x="530" y="698">15</text><text x="378" y="786">9</text><text x="460" y="854">7</text><text x="503" y="881">6</text><text x="674" y="898">14</text><text x="646" y="958">12</text><text x="223" y="936">1</text><text x="130" y="872">60b</text><text x="335" y="1042">1</text><text x="1188" y="649">327</text><text x="1224" y="663">325</text><text x="1122" y="607">24</text><text x="1125" y="714">12</text><text x="1163" y="729">10</text><text x="1197" y="741">8</text><text x="964" y="835">315</text><text x="1158" y="907">319</text><text x="1008" y="774">3b</text><text x="1060" y="840">3a</text><text x="1446" y="726">346</text><text x="1246" y="1042">312</text><text x="1348" y="990">6</text><text x="1304" y="1019">8</text><text x="1394" y="1010">4</text><text x="1383" y="1041">6</text></g><text x="415" y="551" font-size="24" fill="#3d8be0" font-weight="bold" text-anchor="middle">P</text><text x="528" y="574" font-size="22" fill="#3d8be0" font-weight="bold" text-anchor="middle">P</text><text x="1286" y="435" font-size="24" fill="#3d8be0" font-weight="bold" text-anchor="middle">P</text><text x="1448" y="334" font-size="22" fill="#a9c9ee" font-weight="bold" text-anchor="middle">P</text><text x="925" y="624" font-size="22" fill="#a9c9ee" font-weight="bold" text-anchor="middle">P</text><text x="1108" y="573" font-size="20" fill="#a9c9ee" font-weight="bold" text-anchor="middle">P</text><text x="1312" y="707" font-size="22" fill="#a9c9ee" font-weight="bold" text-anchor="middle">P</text><text x="1216" y="745" font-size="20" fill="#a9c9ee" font-weight="bold" text-anchor="middle">P</text><text x="1202" y="933" font-size="22" fill="#a9c9ee" font-weight="bold" text-anchor="middle">P</text><text x="1440" y="910" font-size="22" fill="#3d8be0" font-weight="bold" text-anchor="middle">P</text><text x="1410" y="1042" font-size="20" fill="#a9c9ee" font-weight="bold" text-anchor="middle">P</text><text x="173" y="833" font-size="20" fill="#a9c9ee" font-weight="bold" text-anchor="middle">P</text><rect x="426.5" y="645" width="21" height="25" rx="2" fill="#f6ecd0" stroke="#c9b98a" stroke-width="1"/><text x="437.0" y="664" font-size="17" fill="#444" text-anchor="middle">1</text><rect x="1119.5" y="741" width="21" height="25" rx="2" fill="#f6ecd0" stroke="#c9b98a" stroke-width="1"/><text x="1130.0" y="760" font-size="17" fill="#444" text-anchor="middle">1</text><g fill="#8686d4"><rect x="478" y="460" width="8" height="8"/><rect x="522" y="485" width="8" height="8"/><rect x="523" y="485.5" width="8" height="8"/><rect x="1269" y="896" width="8" height="8"/><rect x="1218" y="964" width="8" height="8"/><rect x="1435" y="933" width="8" height="8"/><rect x="1445" y="394" width="8" height="8"/></g><g fill="#c98a2a"><circle cx="1086" cy="280" r="3"/><circle cx="1240" cy="288" r="3"/><circle cx="744" cy="561" r="3"/><circle cx="898" cy="311" r="3"/><circle cx="84" cy="948" r="3"/><circle cx="186" cy="971" r="3"/><circle cx="721" cy="708" r="3"/><circle cx="700" cy="779" r="3"/><circle cx="563" cy="865" r="3"/><circle cx="553" cy="897" r="3"/><circle cx="540" cy="931" r="3"/><circle cx="522" cy="978" r="3"/><circle cx="614" cy="990" r="3"/><circle cx="607" cy="1005" r="3"/><circle cx="1371" cy="913" r="3"/><circle cx="1335" cy="930" r="3"/><circle cx="1322" cy="941" r="3"/><circle cx="1292" cy="964" r="3"/><circle cx="1276" cy="978" r="3"/><circle cx="1267" cy="992" r="3"/><circle cx="1396" cy="938" r="3"/></g><g fill="#a43bc0"><circle cx="61" cy="367" r="3"/><circle cx="265" cy="663" r="3"/><circle cx="106" cy="842" r="3"/><circle cx="116" cy="953" r="3"/><circle cx="713" cy="723" r="3"/><circle cx="579" cy="796" r="3"/><circle cx="543" cy="820" r="3"/><circle cx="552" cy="847" r="3"/><circle cx="641" cy="910" r="3"/><circle cx="637" cy="921" r="3"/><circle cx="632" cy="932" r="3"/><circle cx="625" cy="950" r="3"/><circle cx="1430" cy="752" r="3"/></g><circle cx="38" cy="475" r="3.2" fill="#b81f2a"/><g fill="#5a6b1f"><circle cx="1017" cy="45" r="3"/><circle cx="1389" cy="307" r="3"/><circle cx="1397" cy="324" r="3"/></g><path d="M233,438 h4 l3,11 h11 l3,-9 h-15 M241,453 a1.8,1.8 0 1,0 0.1,0 M249,453 a1.8,1.8 0 1,0 0.1,0" fill="none" stroke="#a54ad0" stroke-width="2.2"/><path d="M239,441 h14 l-2.5,7 h-9.5 z" fill="#a54ad0"/><path d="M664,835 h4 l3,11 h11 l3,-9 h-15 M672,850 a1.8,1.8 0 1,0 0.1,0 M680,850 a1.8,1.8 0 1,0 0.1,0" fill="none" stroke="#a54ad0" stroke-width="2.2"/><path d="M670,838 h14 l-2.5,7 h-9.5 z" fill="#a54ad0"/><g stroke="#34a34a" stroke-width="2.6" fill="none" stroke-linecap="round"><circle cx="609" cy="720" r="1.8" fill="#34a34a"/><path d="M607,724 l-3,7 l4,3 l-2,6 M604,731 l-5,4 M607,725 l5,3 l3,-2 M606,725 l-5,1"/></g><g stroke="#34a34a" stroke-width="2.6" fill="none" stroke-linecap="round"><circle cx="661" cy="857" r="1.8" fill="#34a34a"/><path d="M659,861 l-3,7 l4,3 l-2,6 M656,868 l-5,4 M659,862 l5,3 l3,-2 M658,862 l-5,1"/></g><g fill="#34a34a"><circle cx="871" cy="310" r="3"/><circle cx="879" cy="318" r="3"/><circle cx="864" cy="319" r="3"/><circle cx="760" cy="752" r="3"/><circle cx="768" cy="760" r="3"/><circle cx="754" cy="761" r="3"/></g><path d="M1005,430 h18 M1003,437 h22 M1009,430 l-4,12 M1019,430 l4,12" stroke="#34a34a" stroke-width="2.4" fill="none"/><g fill="#8a6a20"><rect x="902" y="364" width="11" height="10" rx="2"/><rect x="932" y="366" width="6" height="20"/><rect x="929" y="384" width="12" height="3"/><rect x="929" y="364" width="12" height="3"/><path d="M1352,408 l12,-9 l12,9 v12 h-24 z"/><rect x="1282" y="321" width="13" height="11" rx="2"/><path d="M1284,318 q6,-12 14,-10" stroke="#8a6a20" stroke-width="2" fill="none"/><rect x="61" y="686" width="16" height="14"/><circle cx="69" cy="680" r="5"/><rect x="128" y="716" width="16" height="14"/><circle cx="136" cy="710" r="5"/><rect x="1322" y="930" width="7" height="22"/><rect x="1319" y="950" width="13" height="3"/><rect x="1319" y="928" width="13" height="3"/><path d="M1130,1012 v-18 l18,-4 v18" stroke="#8a6a20" stroke-width="3" fill="none"/><ellipse cx="1126" cy="1013" rx="5" ry="3.5"/><ellipse cx="1144" cy="1009" rx="5" ry="3.5"/><rect x="1340" y="793" width="12" height="10" rx="2"/></g><g stroke="#3d8be0" stroke-width="2" fill="none"><circle cx="637" cy="594" r="4"/><circle cx="649" cy="594" r="4"/><path d="M637,594 l5,-9 h7 l0,9 M640,583 h5"/><circle cx="437" cy="1039" r="4"/><circle cx="449" cy="1039" r="4"/><path d="M437,1039 l5,-9 h7 l0,9"/></g><rect x="232" y="1005" width="9" height="16" fill="none" stroke="#8fb8e8" stroke-width="2"/><rect x="244" y="1008" width="5" height="12" fill="#8fb8e8"/><g fill="none" stroke="#555" stroke-width="1.3"><rect x="581" y="529" width="6" height="14" rx="3"/><path d="M581,534 h6 M581,538 h6"/><rect x="641" y="549" width="6" height="14" rx="3"/><path d="M641,554 h6 M641,558 h6"/><rect x="604" y="571" width="6" height="14" rx="3"/><path d="M604,576 h6 M604,580 h6"/><rect x="765" y="610" width="6" height="14" rx="3"/><path d="M765,615 h6 M765,619 h6"/><rect x="249" y="704" width="6" height="14" rx="3"/><path d="M249,709 h6 M249,713 h6"/><rect x="312" y="698" width="6" height="14" rx="3"/><path d="M312,703 h6 M312,707 h6"/><rect x="286" y="734" width="6" height="14" rx="3"/><path d="M286,739 h6 M286,743 h6"/><rect x="1302" y="358" width="6" height="14" rx="3"/><path d="M1302,363 h6 M1302,367 h6"/><rect x="1336" y="367" width="6" height="14" rx="3"/><path d="M1336,372 h6 M1336,376 h6"/><rect x="1326" y="378" width="6" height="14" rx="3"/><path d="M1326,383 h6 M1326,387 h6"/><rect x="1386" y="358" width="6" height="14" rx="3"/><path d="M1386,363 h6 M1386,367 h6"/><rect x="1388" y="379" width="6" height="14" rx="3"/><path d="M1388,384 h6 M1388,388 h6"/><rect x="1259" y="811" width="6" height="14" rx="3"/><path d="M1259,816 h6 M1259,820 h6"/><rect x="1233" y="837" width="6" height="14" rx="3"/><path d="M1233,842 h6 M1233,846 h6"/><rect x="1332" y="737" width="6" height="14" rx="3"/><path d="M1332,742 h6 M1332,746 h6"/><rect x="1363" y="711" width="6" height="14" rx="3"/><path d="M1363,716 h6 M1363,720 h6"/><rect x="1334" y="680" width="6" height="14" rx="3"/><path d="M1334,685 h6 M1334,689 h6"/><rect x="1368" y="795" width="6" height="14" rx="3"/><path d="M1368,800 h6 M1368,804 h6"/><rect x="1393" y="782" width="6" height="14" rx="3"/><path d="M1393,787 h6 M1393,791 h6"/><rect x="1407" y="759" width="6" height="14" rx="3"/><path d="M1407,764 h6 M1407,768 h6"/></g><g fill="#333"><path d="M96,537 l8.280000000000001,3.42 l-3.9000000000000004,1.62 l2.2800000000000002,-5.5200000000000005 z" /><path d="M237,560 l3.15,-8.459999999999999 l1.77,3.8699999999999997 l-5.64,-2.0999999999999996 z" /><path d="M72,475 l-3.15,8.459999999999999 l-1.77,-3.8699999999999997 l5.64,2.0999999999999996 z" /><path d="M390,549 l3.15,-8.459999999999999 l1.77,3.8699999999999997 l-5.64,-2.0999999999999996 z" /></g><polygon points="994,372 1020,346 1079,366 1063,396 1046,392" fill="#e9fde5" stroke="#8a5a86" stroke-width="3"/><text transform="translate(1000.0,346.0) rotate(0.0)" font-size="13.5" fill="#73266a" textLength="62.0" lengthAdjust="spacingAndGlyphs" font-weight="bold" stroke="#fff" stroke-opacity="0.75" stroke-width="2.4" paint-order="stroke" stroke-linejoin="round">Offener</text><text transform="translate(1014.0,364.5) rotate(0.0)" font-size="13.5" fill="#73266a" textLength="33.0" lengthAdjust="spacingAndGlyphs" font-weight="bold" stroke="#fff" stroke-opacity="0.75" stroke-width="2.4" paint-order="stroke" stroke-linejoin="round">Stall</text><polygon points="686.0,456.0 812.0,493.0 777.0,587.0 661.0,553.0" fill="none" stroke="#5fd27c" stroke-width="3.2"/><circle cx="736" cy="522" r="13" fill="#6fd282"/></svg><svg width="1472" height="1045" viewBox="0 0 1472 1045" style="position:absolute;left:0;top:0"><circle cx="1421" cy="994" r="16.5" fill="#222"/><rect x="1418.6" y="990" width="5" height="13" fill="#fff"/><circle cx="1421" cy="984.5" r="3" fill="#fff"/><rect x="1416.2" y="1001.5" width="9.6" height="2.6" fill="#fff"/><rect x="1416.2" y="989.5" width="5" height="2.4" fill="#fff"/></svg>
</div>
<div class="card" style="left:1519px;top:309px;width:737px;height:1045px"></div>
<div class="card" style="left:2284px;top:309px;width:2110px;height:1045px"></div>
<div class="card" style="left:19px;top:1423px;width:2165px;height:179px"></div>
<div class="card" style="left:2230px;top:1423px;width:2164px;height:179px"></div>
<div class="card" style="left:19px;top:1626px;width:2165px;height:560px"></div>
<div class="card" style="left:2230px;top:1626px;width:2164px;height:560px"></div>
<span class="t" style="left:1590.0px;top:376.8px;font-size:38px;color:#3f3f3f;transform:scaleX(1.0125);">Life-cycle Cost (Annualized)</span>
<span class="t" style="left:1591.0px;top:432.3px;font-size:93px;color:#3f3f3f;transform:scaleX(0.9570);">84</span>
<span class="t" style="left:1709.0px;top:461.9px;font-size:58px;color:#3f3f3f;transform:scaleX(0.8966);">k</span>
<span class="t" style="left:1745.0px;top:481.4px;font-size:35px;color:#3f3f3f;transform:scaleX(0.9592);">CHF</span>
<span class="t" style="left:1589.0px;top:601.8px;font-size:38px;color:#3f3f3f;transform:scaleX(1.0032);">Annual Emissions</span>
<span class="t" style="left:1588.0px;top:658.3px;font-size:93px;color:#3f3f3f;transform:scaleX(0.9436);">4.8</span>
<span class="t" style="left:1723.0px;top:706.5px;font-size:36px;color:#3f3f3f;transform:scaleX(0.9639);">Tons CO</span>
<span class="t" style="left:1858.0px;top:723.0px;font-size:26px;color:#3f3f3f;transform:scaleX(1.1065);">2</span>
<span class="t" style="left:1875.0px;top:706.5px;font-size:36px;color:#3f3f3f;transform:scaleX(1.0570);">-eq</span>
<span class="t" style="left:1590.0px;top:826.3px;font-size:28px;color:#80cb84;transform:scaleX(0.9443);">Green Premiums (GP)</span>
<span class="t" style="left:1591.0px;top:861.6px;font-size:43px;color:#80cb84;transform:scaleX(1.0266);">13'819.1</span>
<span class="t" style="left:1770.0px;top:870.9px;font-size:32px;color:#80cb84;transform:scaleX(0.8447);">CHF/Ton CO2 (Annualized)</span>
<span class="t" style="left:1590.0px;top:1021.2px;font-size:34px;color:#3f3f3f;transform:scaleX(1.0585);">Autarkic System</span>
<span class="t" style="left:1590.0px;top:1059.1px;font-size:27px;color:#ababab;transform:scaleX(1.0356);">(95'635.4 MWh Non On-site Imports)</span>
<span class="t" style="left:1590.0px;top:1123.2px;font-size:34px;color:#3f3f3f;transform:scaleX(1.0176);">Fossil Fuel Free System</span>
<span class="t" style="left:1590.0px;top:1162.1px;font-size:27px;color:#ababab;transform:scaleX(1.0092);">(0 MWh Fossil Fuel based Imports)</span>
<span class="t" style="left:1590.0px;top:1225.2px;font-size:34px;color:#3f3f3f;transform:scaleX(1.0585);">Net-zero CO2 System</span>
<span class="t" style="left:1590.0px;top:1264.1px;font-size:27px;color:#ababab;transform:scaleX(0.9677);">(4.8 Tons CO2 Emissions)</span>
<svg width="4400" height="2167"><path d="M2088,1029 L2131,1071 M2131,1029 L2088,1071" stroke="#d2d2d2" stroke-width="11" fill="none"/><path d="M2088,1233 L2131,1276 M2131,1233 L2088,1276" stroke="#d2d2d2" stroke-width="11" fill="none"/><path d="M2088,1150 L2104,1166 L2138,1137" stroke="#4cae4f" stroke-width="9" fill="none"/></svg>
<div class="abs" style="left:2312px;top:337px;width:1028px;height:208px;border-left:2px solid #d6d6d6;border-top:5px solid #4458ea;background:#fff"></div>
<div class="abs" style="left:3338px;top:337px;width:1027px;height:208px;border:2px solid #d6d6d6;background:#f9f9f9"></div>
<span class="t" style="left:2499.0px;top:398.8px;font-size:38px;color:#1d1d2b;transform:scaleX(0.9556);">Total Cost/Income Balance, (Annualized)</span>
<span class="t" style="left:3415.0px;top:395.8px;font-size:38px;color:#585858;transform:scaleX(0.9611);">Total Cost/Income Balance, (Annualized) - Breakdown</span>
<span class="t" style="left:3657.0px;top:451.3px;font-size:38px;color:#585858;transform:scaleX(0.9643);">Technologies &amp; Carriers</span>
<svg width="4400" height="2167"><rect x="2590.5" y="699" width="1406.5" height="438.5" fill="#e8eaf6"/><rect x="2702.0" y="709" width="3" height="419" fill="#fff"/><rect x="2982.9" y="709" width="3" height="419" fill="#fff"/><rect x="3263.5" y="709" width="3" height="419" fill="#fff"/><rect x="3544.5" y="709" width="3" height="419" fill="#fff"/><rect x="3825.5" y="709" width="3" height="419" fill="#fff"/><rect x="2669.5" y="751" width="34" height="335" fill="#90c978"/><rect x="2703.5" y="751" width="761" height="335" fill="#565b9f"/><rect x="3464.5" y="751" width="2.5" height="335" fill="#ecebf4"/><rect x="3467" y="751" width="214" height="335" fill="#cdbd96"/><rect x="3681" y="751" width="3" height="335" fill="#f0eef6"/><rect x="3684" y="751" width="233" height="335" fill="#a5abf9"/><text x="2340.0" y="929.0" font-size="30" fill="#2a2a2a" textLength="248.0" lengthAdjust="spacingAndGlyphs" >hub1 text changed</text><text x="3310.0" y="929.0" font-size="30" fill="#ffffff" textLength="148.0" lengthAdjust="spacingAndGlyphs" stroke="#fff" stroke-width="0.8">Investment</text><text x="0.0" y="0.0" font-size="12" fill="#4a5a40" textLength="60.0" lengthAdjust="spacingAndGlyphs" transform="translate(2682.5,889) rotate(90)">Income</text><text x="0.0" y="0.0" font-size="31" fill="#444" textLength="266.0" lengthAdjust="spacingAndGlyphs" transform="translate(3648,786) rotate(90)">Fuel&amp;Capacity Cost</text><text x="0.0" y="0.0" font-size="31" fill="#444" textLength="255.0" lengthAdjust="spacingAndGlyphs" transform="translate(3884,791.5) rotate(90)">Variable O&amp;M Cost</text><text x="2703.5" y="1169.5" font-size="30" fill="#2a2a2a" text-anchor="middle" >0</text><text x="2984.4" y="1169.5" font-size="30" fill="#2a2a2a" text-anchor="middle" >20</text><text x="3265.0" y="1169.5" font-size="30" fill="#2a2a2a" text-anchor="middle" >40</text><text x="3546.0" y="1169.5" font-size="30" fill="#2a2a2a" text-anchor="middle" >60</text><text x="3827.0" y="1169.5" font-size="30" fill="#2a2a2a" text-anchor="middle" >80</text><text x="3004.0" y="1238.5" font-size="36" fill="#2a2a2a" textLength="582.0" lengthAdjust="spacingAndGlyphs" >Life-cycle Cost (k CHF, annualized)</text><rect x="4048" y="729.0" width="28" height="27" fill="#565b9f"/><text x="4108.0" y="753.3" font-size="26" fill="#2a2a2a" textLength="121.0" lengthAdjust="spacingAndGlyphs" >Investment</text><rect x="4048" y="773.2" width="28" height="27" fill="#cdbd96"/><text x="4108.0" y="797.5" font-size="26" fill="#2a2a2a" textLength="217.0" lengthAdjust="spacingAndGlyphs" >Fuel&amp;Capacity Cost</text><rect x="4048" y="817.4" width="28" height="27" fill="#90c978"/><text x="4108.0" y="841.7" font-size="26" fill="#2a2a2a" textLength="80.5" lengthAdjust="spacingAndGlyphs" >Income</text><rect x="4048" y="861.6" width="28" height="27" fill="#7f86e2"/><text x="4108.0" y="885.9" font-size="26" fill="#2a2a2a" textLength="180.0" lengthAdjust="spacingAndGlyphs" >Fixed O&amp;M Cost</text><rect x="4048" y="905.8" width="28" height="27" fill="#a5abf9"/><text x="4108.0" y="930.1" font-size="26" fill="#2a2a2a" textLength="208.0" lengthAdjust="spacingAndGlyphs" >Variable O&amp;M Cost</text></svg>

<span class="t" style="left:822.0px;top:1472.9px;font-size:84px;color:#404040;transform:scaleX(0.9648);">Optimal Design</span>
<span class="t" style="left:2975.0px;top:1472.9px;font-size:84px;color:#404040;transform:scaleX(0.9829);">Optimal Operation</span>

<svg width="4400" height="2167"><rect x="576" y="1684.5" width="1146" height="380" rx="12" fill="#f2f2f2"/><text x="93.0" y="1738.0" font-size="23.5" fill="#1f1f1f" textLength="428.5" lengthAdjust="spacingAndGlyphs" >Import Candidates &amp; On-site Resources</text><text x="1023.5" y="1710.0" font-size="23.5" fill="#1f1f1f" textLength="251.0" lengthAdjust="spacingAndGlyphs" >Technology Candidates</text><text x="1776.5" y="1738.0" font-size="23.5" fill="#1f1f1f" textLength="332.0" lengthAdjust="spacingAndGlyphs" >Export Candidates &amp; Demands</text><path d="M389,1821.6 H645 V1881 H1160" fill="none" stroke="#ebbda6" stroke-width="3"/><polygon points="585.0,1821.6 569.0,1815.6 573.8,1821.6 569.0,1827.6" fill="#ebbda6"/><polygon points="1162.0,1881.0 1146.0,1875.0 1150.8,1881.0 1146.0,1887.0" fill="#ebbda6"/><rect x="636.5" y="1812.5" width="18" height="18" fill="#ebbda6"/><path d="M380,1930.4 H703" fill="none" stroke="#f2e04e" stroke-width="3"/><polygon points="585.0,1930.4 569.0,1924.4 573.8,1930.4 569.0,1936.4" fill="#f2e04e"/><polygon points="706.0,1930.4 690.0,1924.4 694.8,1930.4 690.0,1936.4" fill="#f2e04e"/><rect x="636.5" y="1921.5" width="18" height="18" fill="#f2e04e"/><path d="M882,1942.8 H1011.6 V2029.7 H1072" fill="none" stroke="#86c46f" stroke-width="3"/><polygon points="898.0,1942.8 882.0,1936.8 886.8,1942.8 882.0,1948.8" fill="#86c46f"/><polygon points="1011.6,1989.0 1005.6,1973.0 1011.6,1977.8 1017.6,1973.0" fill="#86c46f"/><rect x="933.5" y="1934.5" width="17.5" height="17" fill="#86c46f"/><path d="M1011.6,1990 V2029.7 H1072" fill="none" stroke="#6b854d" stroke-width="3"/><circle cx="1011.6" cy="1996" r="8.5" fill="#6b854d"/><polygon points="1011.6,2017.0 1005.6,1999.0 1011.6,2004.4 1017.6,1999.0" fill="#6b854d"/><path d="M380,2039.3 H1868 M1713.7,2039.3 V2133 H1868 M1090.8,2021 V1957 H1160" fill="none" stroke="#6b854d" stroke-width="3"/><polygon points="585.0,2039.3 569.0,2033.3 573.8,2039.3 569.0,2045.3" fill="#6b854d"/><polygon points="1870.0,2039.3 1854.0,2033.3 1858.8,2039.3 1854.0,2045.3" fill="#6b854d"/><polygon points="1870.0,2133.0 1854.0,2127.0 1858.8,2133.0 1854.0,2139.0" fill="#6b854d"/><polygon points="1162.0,1957.0 1146.0,1951.0 1150.8,1957.0 1146.0,1963.0" fill="#6b854d"/><rect x="1071" y="2020.5" width="39.5" height="39" fill="#60803f"/><path d="M1306,1915.7 H1850 M1370.3,1903 V1873 H1433" fill="none" stroke="#d0453a" stroke-width="3"/><polygon points="1323.0,1915.7 1307.0,1909.7 1311.8,1915.7 1307.0,1921.7" fill="#d0453a"/><polygon points="1852.0,1915.7 1836.0,1909.7 1840.8,1915.7 1836.0,1921.7" fill="#d0453a"/><polygon points="1435.0,1873.0 1419.0,1867.0 1423.8,1873.0 1419.0,1879.0" fill="#d0453a"/><polygon points="1370.3,1903.0 1364.3,1887.0 1370.3,1891.8 1376.3,1887.0" fill="#d0453a"/><rect x="1357.5" y="1903" width="25.5" height="25" fill="#d0453a"/><rect x="225" y="1785" width="164.5" height="73.5" fill="#ebbda6"/><text x="235.5" y="1828.0" font-size="23.5" fill="#1f1f1f" textLength="146.0" lengthAdjust="spacingAndGlyphs" >Heat Ambient</text><rect x="234" y="1893.5" width="147" height="74" fill="#f2e04e"/><text x="250.5" y="1937.0" font-size="23.5" fill="#1f1f1f" textLength="115.0" lengthAdjust="spacingAndGlyphs" >Solar Roof</text><rect x="234" y="2002.5" width="147" height="74" fill="#6b854d"/><text x="256.0" y="2046.0" font-size="23.5" fill="#1f1f1f" textLength="103.0" lengthAdjust="spacingAndGlyphs" >Electricity</text><rect x="707" y="1895" width="174" height="95.5" fill="#86c46f" stroke="#7ed98f" stroke-width="3"/><text x="719.5" y="1920.5" font-size="23.5" fill="#1f1f1f" textLength="149.5" lengthAdjust="spacingAndGlyphs" >Solar PV, roof</text><text x="737.0" y="1950.5" font-size="23.5" fill="#1f1f1f" textLength="114.0" lengthAdjust="spacingAndGlyphs" >installation</text><text x="752.5" y="1978.5" font-size="23.5" fill="#1f1f1f" textLength="83.0" lengthAdjust="spacingAndGlyphs" >82.6kW</text><rect x="1163.5" y="1868.5" width="141" height="93" fill="#d0453a" stroke="#7ed98f" stroke-width="3"/><text x="1173.0" y="1893.0" font-size="23.5" fill="#1f1f1f" textLength="124.0" lengthAdjust="spacingAndGlyphs" >Air-to-water</text><text x="1218.0" y="1922.0" font-size="23.5" fill="#1f1f1f" textLength="32.0" lengthAdjust="spacingAndGlyphs" >HP</text><text x="1187.5" y="1950.5" font-size="23.5" fill="#1f1f1f" textLength="93.0" lengthAdjust="spacingAndGlyphs" >158.9kW</text><rect x="1436" y="1784.5" width="223" height="93.5" fill="#d0453a" stroke="#7ed98f" stroke-width="3"/><text x="1505.5" y="1809.0" font-size="23.5" fill="#1f1f1f" textLength="84.0" lengthAdjust="spacingAndGlyphs" >Generic</text><text x="1449.0" y="1838.0" font-size="23.5" fill="#1f1f1f" textLength="199.0" lengthAdjust="spacingAndGlyphs" >Hot Water Storage</text><text x="1487.0" y="1867.0" font-size="23.5" fill="#1f1f1f" textLength="121.0" lengthAdjust="spacingAndGlyphs" >8257.3kWh</text><rect x="1851.5" y="1879" width="183.5" height="73" fill="#d0453a"/><text x="1867.0" y="1909.3" font-size="23.5" fill="#1f1f1f" textLength="152.5" lengthAdjust="spacingAndGlyphs" >Heat 70-80 °C</text><text x="1890.0" y="1937.3" font-size="23.5" fill="#1f1f1f" textLength="107.0" lengthAdjust="spacingAndGlyphs" >(Demand)</text><rect x="1869.5" y="1988" width="147" height="73.5" fill="#6b854d"/><text x="1891.5" y="2018.8" font-size="23.5" fill="#1f1f1f" textLength="103.0" lengthAdjust="spacingAndGlyphs" >Electricity</text><text x="1889.5" y="2046.7" font-size="23.5" fill="#1f1f1f" textLength="107.0" lengthAdjust="spacingAndGlyphs" >(Demand)</text><rect x="1869.5" y="2097.5" width="147" height="74" fill="#6b854d"/><text x="1891.5" y="2140.8" font-size="23.5" fill="#1f1f1f" textLength="103.0" lengthAdjust="spacingAndGlyphs" >Electricity</text></svg>

<svg width="4400" height="2167"><path d="M2480,1884.6 C2562,1884.6 2562,1920.4 2644,1920.4 V2200 H2480 Z" fill="#f2df4e"/><path d="M2680,1920.4 C2762,1920.4 2762,1953.7 2844,1953.7 V2200 H2680 Z" fill="#f2df4e"/><rect x="2443.5" y="1885.5" width="37" height="320" fill="#f2df4e" stroke="#8a8240" stroke-width="2.5"/><rect x="2644.5" y="1921.5" width="36" height="320" fill="#f2df4e" stroke="#8a8240" stroke-width="2.5"/><rect x="2843.5" y="1953.7" width="37.5" height="320" fill="#2f3131"/><path d="M2880.5,1954.5 C2962,1954.5 2962,2141 3044,2141 V2189.5 C2962,2189.5 2962,2003 2880.5,2003 Z" fill="#83bd68"/><path d="M3080,2141 C3120,2141 3135,2160 3175,2200 H3080 Z" fill="#83bd68"/><rect x="3044.5" y="2141.5" width="35.5" height="80" fill="#83bd68" stroke="#5f7f4e" stroke-width="2.5"/><path d="M4044,2105 C3930,2105 3850,2130 3760,2175 H4044 Z" fill="#6b854d"/><rect x="4044.5" y="2105.5" width="36" height="100" fill="#6b854d" stroke="#4d6137" stroke-width="2.5"/><text x="2487.0" y="2055.5" font-size="24" fill="#fff" textLength="229.0" lengthAdjust="spacingAndGlyphs" stroke="#fff" stroke-width="4" stroke-linejoin="round" opacity="0.9">Solar Roof (Import)</text><text x="2487.0" y="2055.5" font-size="24" fill="#2b2b4f" textLength="229.0" lengthAdjust="spacingAndGlyphs" >Solar Roof (Import)</text><text x="2687.0" y="2093.2" font-size="24" fill="#fff" textLength="121.5" lengthAdjust="spacingAndGlyphs" stroke="#fff" stroke-width="4" stroke-linejoin="round" opacity="0.9">Solar Roof</text><text x="2687.0" y="2093.2" font-size="24" fill="#2b2b4f" textLength="121.5" lengthAdjust="spacingAndGlyphs" >Solar Roof</text><text x="2887.0" y="2125.5" font-size="24" fill="#fff" textLength="292.0" lengthAdjust="spacingAndGlyphs" stroke="#fff" stroke-width="4" stroke-linejoin="round" opacity="0.9">Solar PV, roof installation</text><text x="2887.0" y="2125.5" font-size="24" fill="#2b2b4f" textLength="292.0" lengthAdjust="spacingAndGlyphs" >Solar PV, roof installation</text><text x="3087.0" y="2175.5" font-size="24" fill="#fff" textLength="245.0" lengthAdjust="spacingAndGlyphs" stroke="#fff" stroke-width="4" stroke-linejoin="round" opacity="0.9">Electricity Renewable</text><text x="3087.0" y="2175.5" font-size="24" fill="#2b2b4f" textLength="245.0" lengthAdjust="spacingAndGlyphs" >Electricity Renewable</text><text x="3797.0" y="2158.8" font-size="24" fill="#fff" textLength="241.0" lengthAdjust="spacingAndGlyphs" stroke="#fff" stroke-width="4" stroke-linejoin="round" opacity="0.9">Electricity (Demand)</text><text x="3797.0" y="2158.8" font-size="24" fill="#2b2b4f" textLength="241.0" lengthAdjust="spacingAndGlyphs" >Electricity (Demand)</text></svg>

<svg width="4400" height="2167"><defs><filter id="ds" x="-40%" y="-40%" width="180%" height="200%"><feGaussianBlur in="SourceAlpha" stdDeviation="30"/><feOffset dx="12" dy="28"/><feComponentTransfer><feFuncA type="linear" slope="0.55"/></feComponentTransfer><feMerge><feMergeNode/><feMergeNode in="SourceGraphic"/></feMerge></filter></defs><path d="M2230,635 C2120,665 1990,730 1912.5,826.5 L1870.5,794 L1889,977 L2073,958 L2010.5,906.5 C2040,840 2120,740 2230,635 Z" fill="#fe0000" filter="url(#ds)"/></svg>

</body></html>
